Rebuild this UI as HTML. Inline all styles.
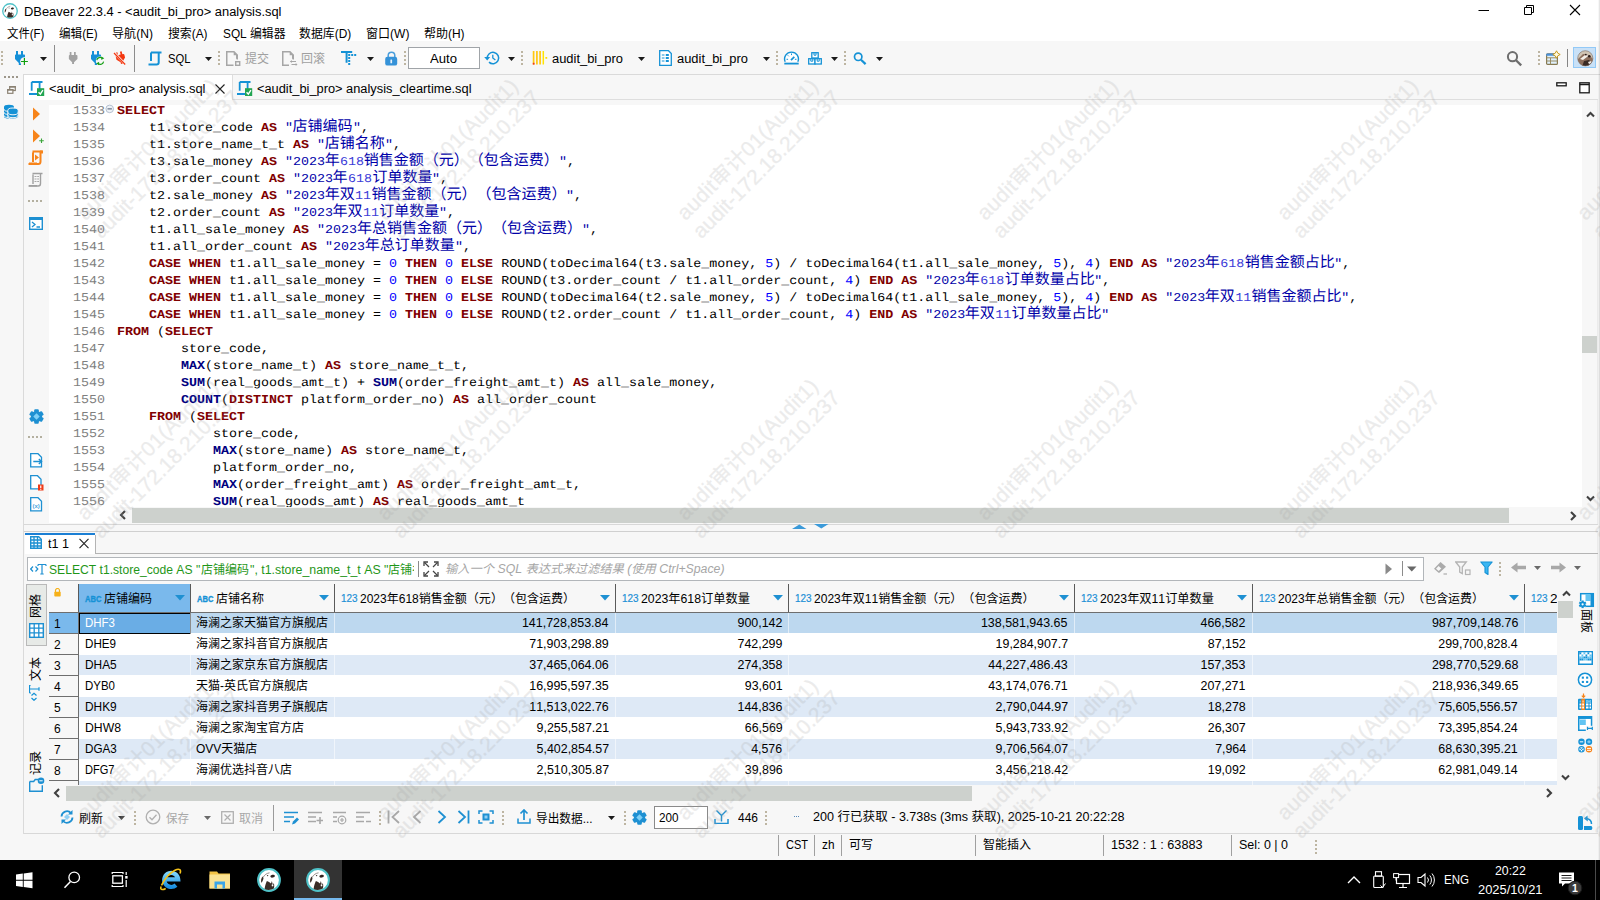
<!DOCTYPE html>
<html lang="zh-CN"><head><meta charset="utf-8"><title>DBeaver 22.3.4 - analysis.sql</title>
<style>
html,body{margin:0;padding:0;overflow:hidden}
body{width:1600px;height:900px;overflow:hidden;background:#f7f7f7;position:relative;font-family:"Liberation Sans","Noto Sans CJK SC",sans-serif;font-size:12px;color:#000;text-spacing-trim:space-all;font-kerning:none}
.a{position:absolute;display:block}
.t{position:absolute;white-space:pre;display:block}
.m{font-family:"Liberation Mono","Noto Sans CJK SC",monospace;text-rendering:geometricPrecision}
.c{display:inline-block;font-size:15px;line-height:16px;transform:scaleX(0.9000);transform-origin:0 0}
.k{color:#800000;font-weight:bold}
.f{color:#000080;font-weight:bold}
.s{color:#0000a8}
.n{color:#0000ff}
.wm{position:absolute;white-space:pre;text-align:center;font-size:21px;line-height:24px;color:#a4a4a4;-webkit-text-stroke:.3px #a4a4a4;opacity:.21;transform:rotate(-45deg);transform-origin:0 0;pointer-events:none}
.wm i{font-style:normal;letter-spacing:.3px}
.wm b{font-weight:normal;position:relative;left:2.6px}
</style></head>
<body>
<div class="a" style="left:0px;top:0px;width:1600px;height:41px;background:#fff;"></div>
<svg class="a" style="left:2px;top:3px;" width="16" height="16" viewBox="0 0 24 24"><circle cx="12" cy="12" r="10.900" fill="#fff" stroke="#4fc2c8" stroke-width="2"/><path d="M7.600 21c.4-3 1.200-5.600 2.300-7.900 1.500.5 2.900 1.300 4.100 2.400l.9-2.600.7 3.100 1.300-.6c.5 1.700.4 3.500 0 5.100-3 1.700-6.400 1.800-9.300.5z" fill="#3a2d27"/><path d="M14.600 16.700l1.500-.7.300 2.100-1.400.5z" fill="#fff"/><ellipse cx="15.600" cy="8.200" rx="2.300" ry="1.400" transform="rotate(-10 15.600 8.200)" fill="#2e2320"/><path d="M5.700 8.600c-1.500 1.500-2 3.900-1.400 6.200 1.100-1.200 1.900-2.900 2.200-4.900z" fill="#3a2d27"/><path d="M6.200 9.300c1.300-2.400 3.400-4 6.300-4.500" stroke="#7a6f6a" stroke-width=".8" fill="none"/><circle cx="10.600" cy="7.600" r=".7" fill="#3a2d27"/></svg>
<span class="t" style="top:2px;font-size:12.5px;line-height:20px;left:23.5px;transform-origin:0 50%;transform:scaleX(1.0322);">DBeaver 22.3.4 - &lt;audit_bi_pro&gt; analysis.sql</span>
<svg class="a" style="left:1478px;top:4px;" width="12" height="12" viewBox="0 0 12 12"><path d="M0.500 6.500H11" stroke="#000" stroke-width="1" fill="none"/></svg>
<svg class="a" style="left:1523px;top:4px;" width="12" height="12" viewBox="0 0 12 12"><path d="M1.500 3.500h7v7h-7zM3.500 3.500v-2h7v7h-2" stroke="#000" stroke-width="1" fill="none"/></svg>
<svg class="a" style="left:1569px;top:4px;" width="12" height="12" viewBox="0 0 12 12"><path d="M1 1l10 10M11 1L1 11" stroke="#000" stroke-width="1.1" fill="none"/></svg>
<span class="t" style="top:23.5px;font-size:12px;line-height:20px;left:7px;transform-origin:0 50%;transform:scaleX(0.951);">文件(F)</span>
<span class="t" style="top:23.5px;font-size:12px;line-height:20px;left:58.8px;transform-origin:0 50%;transform:scaleX(0.9675);">编辑(E)</span>
<span class="t" style="top:23.5px;font-size:12px;line-height:20px;left:112px;transform-origin:0 50%;transform:scaleX(1.0081);">导航(N)</span>
<span class="t" style="top:23.5px;font-size:12px;line-height:20px;left:168px;transform-origin:0 50%;transform:scaleX(0.9875);">搜索(A)</span>
<span class="t" style="top:23.5px;font-size:12px;line-height:20px;left:222.5px;transform-origin:0 50%;transform:scaleX(0.9864);">SQL 编辑器</span>
<span class="t" style="top:23.5px;font-size:12px;line-height:20px;left:298.8px;transform-origin:0 50%;transform:scaleX(0.991);">数据库(D)</span>
<span class="t" style="top:23.5px;font-size:12px;line-height:20px;left:366px;transform-origin:0 50%;transform:scaleX(1.0017);">窗口(W)</span>
<span class="t" style="top:23.5px;font-size:12px;line-height:20px;left:423.8px;transform-origin:0 50%;transform:scaleX(0.9982);">帮助(H)</span>
<div class="a" style="left:0px;top:41px;width:1600px;height:33px;background:#f7f7f7;"></div>
<div class="a" style="left:23px;top:74px;width:1577px;height:1px;background:#dadada;"></div>
<div class="a" style="left:1px;top:51px;width:2px;height:2px;background:#bdb5a2;"></div>
<div class="a" style="left:1px;top:55px;width:2px;height:2px;background:#bdb5a2;"></div>
<div class="a" style="left:1px;top:59px;width:2px;height:2px;background:#bdb5a2;"></div>
<div class="a" style="left:1px;top:63px;width:2px;height:2px;background:#bdb5a2;"></div>
<svg class="a" style="left:14px;top:51px;" width="16" height="16" viewBox="0 0 16 16"><path d="M2 0h2v3.500h3v-3.500h2v3.500h1c.6 0 1 .4 1 1v3.500l-4 4v2h-2.200v-2l-3.800-4v-3.500c0-.6.4-1 1-1z" fill="#1590d8" transform="scale(1)"/><circle cx="10.400" cy="10.500" r="4.300" fill="#f7f7f7"/><path d="M10.400 7v7M6.900 10.500h7" stroke="#10a010" stroke-width="1.200" fill="none"/></svg>
<svg class="a" style="left:40px;top:57px;" width="7" height="4" viewBox="0 0 7 4"><path d="M0 0H7L3.5 4Z" fill="#1a1a1a"/></svg>
<div class="a" style="left:54px;top:45px;width:1px;height:27px;background:#8c8c8c;"></div>
<svg class="a" style="left:68px;top:52px;" width="16" height="16" viewBox="0 0 16 16"><path d="M2 0h2v3.500h3v-3.500h2v3.500h1c.6 0 1 .4 1 1v3.500l-4 4v2h-2.200v-2l-3.800-4v-3.500c0-.6.4-1 1-1z" fill="#a2a2a2" transform="scale(0.86)"/></svg>
<svg class="a" style="left:90px;top:51px;" width="16" height="16" viewBox="0 0 16 16"><path d="M2 0h2v3.500h3v-3.500h2v3.500h1c.6 0 1 .4 1 1v3.500l-4 4v2h-2.200v-2l-3.800-4v-3.500c0-.6.4-1 1-1z" fill="#1590d8" transform="scale(1)"/><circle cx="10.200" cy="9.900" r="4.400" fill="#f7f7f7"/><path d="M6.800 9.200a3.400 3.400 0 0 1 5.600-1.900M13.600 10.600a3.400 3.400 0 0 1-5.600 1.900" stroke="#18a018" stroke-width="1.100" fill="none"/><path d="M11.300 5.500l3 1.800-3 1.700zM9.100 10.800l-3 1.800 3 1.700z" fill="#18a018"/></svg>
<svg class="a" style="left:113px;top:51px;" width="14" height="14" viewBox="0 0 14 14"><g transform="rotate(-14 7 7) translate(2.300 .8) scale(.88)"><path d="M2 0h2v3.500h3v-3.500h2v3.500h1c.6 0 1 .4 1 1v3.500l-4 4v2h-2.200v-2l-3.800-4v-3.500c0-.6.4-1 1-1z" fill="#f4360f"/></g><path d="M1.300 1.800L12 13" stroke="#f7f7f7" stroke-width="2.400"/><path d="M1 2L12.200 13.500" stroke="#f4360f" stroke-width="1.200"/></svg>
<div class="a" style="left:134px;top:45px;width:1px;height:27px;background:#8c8c8c;"></div>
<svg class="a" style="left:148px;top:50.5px;" width="15" height="15" viewBox="0 0 15 15"><path d="M3 1.500H13.500M3 1.500V10M10.700 2V11.500Q10.700 13.500 8.500 13.500H0.500" stroke="#1592d6" stroke-width="2" fill="none" stroke-linejoin="round"/></svg>
<span class="t" style="top:48.5px;font-size:12px;line-height:20px;left:167.5px;transform-origin:0 50%;transform:scaleX(0.9369);">SQL</span>
<svg class="a" style="left:205px;top:57px;" width="7" height="4" viewBox="0 0 7 4"><path d="M0 0H7L3.5 4Z" fill="#1a1a1a"/></svg>
<div class="a" style="left:218px;top:51px;width:2px;height:2px;background:#bdb5a2;"></div>
<div class="a" style="left:218px;top:55px;width:2px;height:2px;background:#bdb5a2;"></div>
<div class="a" style="left:218px;top:59px;width:2px;height:2px;background:#bdb5a2;"></div>
<div class="a" style="left:218px;top:63px;width:2px;height:2px;background:#bdb5a2;"></div>
<svg class="a" style="left:226px;top:51px;" width="15" height="15" viewBox="0 0 15 15"><path d="M0.750 0.750h7.200l3.300 3.300v10.200h-10.500z" fill="none" stroke="#a6a6a6" stroke-width="1.500"/><path d="M7.700 0.500l3.800 3.800v3.500h-1.500v-3.500h-2.300z" fill="#a6a6a6"/><rect x="7.500" y="8.500" width="7.500" height="6.500" fill="#f7f7f7"/><rect x="9.700" y="10.700" width="4" height="3.600" fill="#f7f7f7" stroke="#a6a6a6" stroke-width="1.400"/></svg>
<span class="t" style="top:48.5px;font-size:12px;line-height:20px;left:245px;color:#a0a0a0;transform-origin:0 50%;transform:scaleX(0.9993);">提交</span>
<svg class="a" style="left:282px;top:51px;" width="16" height="15" viewBox="0 0 16 15"><path d="M0.750 0.750h7.200l3.300 3.300v10.200h-10.500z" fill="none" stroke="#a6a6a6" stroke-width="1.500"/><path d="M7.700 0.500l3.800 3.800v3.500h-1.500v-3.500h-2.300z" fill="#a6a6a6"/><rect x="7" y="8.500" width="9" height="6.500" fill="#f7f7f7"/><path d="M8.500 10.500h5.500M9.500 13.500h5.500" stroke="#a6a6a6" stroke-width="1.200"/><path d="M9.800 9l-1.800 1.500 1.800 1.500zM13.700 12l1.800 1.500-1.800 1.500z" fill="#a6a6a6"/></svg>
<span class="t" style="top:48.5px;font-size:12px;line-height:20px;left:301px;color:#a0a0a0;transform-origin:0 50%;transform:scaleX(0.9993);">回滚</span>
<svg class="a" style="left:341px;top:51px;" width="16" height="15" viewBox="0 0 16 15"><path d="M0 0h11.200v1.900h-4.600v9.900h-2v-9.900h-4.600z" fill="#1592d6"/><path d="M7.200 3h2v2h-2zM10.200 3h2v2h-2zM13.200 3h2v2h-2zM7.200 6h2v2h-2zM7.200 9h2v2h-2zM7.200 12h2v2h-2z" fill="#1592d6"/></svg>
<svg class="a" style="left:367px;top:57px;" width="7" height="4" viewBox="0 0 7 4"><path d="M0 0H7L3.5 4Z" fill="#1a1a1a"/></svg>
<svg class="a" style="left:385px;top:50.5px;" width="13" height="15" viewBox="0 0 13 15"><path d="M3.200 6.500v-2a3.300 3.300 0 0 1 6.600 0v2.500" stroke="#4a9edc" stroke-width="1.500" fill="none"/><rect x="0.200" y="5.800" width="12" height="8.800" rx="2.200" fill="#3592d8"/><rect x="5.400" y="8.500" width="1.700" height="3.800" rx=".4" fill="#e8f2fb"/></svg>
<div class="a" style="left:404px;top:51px;width:2px;height:2px;background:#bdb5a2;"></div>
<div class="a" style="left:404px;top:55px;width:2px;height:2px;background:#bdb5a2;"></div>
<div class="a" style="left:404px;top:59px;width:2px;height:2px;background:#bdb5a2;"></div>
<div class="a" style="left:404px;top:63px;width:2px;height:2px;background:#bdb5a2;"></div>
<div class="a" style="left:408px;top:47px;width:72px;height:22px;background:#fff;border:1px solid #a0a4a8;box-sizing:border-box;"></div>
<span class="t" style="top:48.5px;font-size:12.5px;line-height:20px;left:430px;transform-origin:0 50%;transform:scaleX(1.0498);">Auto</span>
<svg class="a" style="left:484px;top:50px;" width="17" height="16" viewBox="0 0 17 16"><path d="M3.300 8.500a5.700 5.700 0 1 1 1.700 3.600" stroke="#1592d6" stroke-width="1.500" fill="none"/><path d="M0.200 7l3 3.600 3-3.600z" fill="#1592d6"/><path d="M8.800 4.800v3.200l2.600 2" stroke="#1592d6" stroke-width="1.300" fill="none"/></svg>
<svg class="a" style="left:508px;top:57px;" width="7" height="4" viewBox="0 0 7 4"><path d="M0 0H7L3.5 4Z" fill="#1a1a1a"/></svg>
<div class="a" style="left:521px;top:51px;width:2px;height:2px;background:#bdb5a2;"></div>
<div class="a" style="left:521px;top:55px;width:2px;height:2px;background:#bdb5a2;"></div>
<div class="a" style="left:521px;top:59px;width:2px;height:2px;background:#bdb5a2;"></div>
<div class="a" style="left:521px;top:63px;width:2px;height:2px;background:#bdb5a2;"></div>
<svg class="a" style="left:532px;top:51px;" width="16" height="14" viewBox="0 0 16 14"><path d="M1.600 0v13.500M4.900 0v13.500M8.100 0v13.500" stroke="#ffc810" stroke-width="1.700"/><path d="M11.300 0v13.500" stroke="#ffe400" stroke-width="1.500"/><rect x="0.800" y="11.800" width="1.700" height="1.800" fill="#f03020"/><rect x="13.400" y="6" width="1.800" height="1.800" fill="#ffe000"/></svg>
<span class="t" style="top:48.5px;font-size:12.5px;line-height:20px;left:552px;transform-origin:0 50%;transform:scaleX(1.0318);">audit_bi_pro</span>
<svg class="a" style="left:637.5px;top:57px;" width="7" height="4" viewBox="0 0 7 4"><path d="M0 0H7L3.5 4Z" fill="#1a1a1a"/></svg>
<svg class="a" style="left:659px;top:50px;" width="13" height="16" viewBox="0 0 13 16"><path d="M0.700 0.700h8.800l2.800 2.800v11.800h-11.600z" fill="#fff" stroke="#1592d6" stroke-width="1.300"/><path d="M2.800 5h2.700M2.800 8h2.700M2.800 11h2.700" stroke="#1592d6" stroke-width="1.200"/><path d="M6.800 4h3v2h-3zM6.800 7h3v2h-3zM6.800 10h3v2h-3z" fill="#1592d6"/></svg>
<span class="t" style="top:48.5px;font-size:12.5px;line-height:20px;left:677px;transform-origin:0 50%;transform:scaleX(1.0318);">audit_bi_pro</span>
<svg class="a" style="left:762.5px;top:57px;" width="7" height="4" viewBox="0 0 7 4"><path d="M0 0H7L3.5 4Z" fill="#1a1a1a"/></svg>
<div class="a" style="left:776px;top:51px;width:2px;height:2px;background:#bdb5a2;"></div>
<div class="a" style="left:776px;top:55px;width:2px;height:2px;background:#bdb5a2;"></div>
<div class="a" style="left:776px;top:59px;width:2px;height:2px;background:#bdb5a2;"></div>
<div class="a" style="left:776px;top:63px;width:2px;height:2px;background:#bdb5a2;"></div>
<svg class="a" style="left:783px;top:51px;" width="17" height="15" viewBox="0 0 17 15"><path d="M2.200 10.800a6.900 6.900 0 1 1 12.600 0" fill="#fff" stroke="#1592d6" stroke-width="1.400"/><path d="M1.300 12.600h14.400" stroke="#1592d6" stroke-width="1.800"/><path d="M8 9.200l3.300-3.400" stroke="#1592d6" stroke-width="1.700"/><path d="M3.500 8.300h1.600M11.900 8.300h1.600M8.500 2.500v1.600M4.800 4.300l1 1" stroke="#1592d6" stroke-width="1"/></svg>
<svg class="a" style="left:808px;top:52px;" width="14" height="13" viewBox="0 0 14 13"><rect x="3.800" y="0.700" width="6.400" height="5.300" fill="#fff" stroke="#1592d6" stroke-width="1.300"/><rect x="0.700" y="6.700" width="6.300" height="5.300" fill="#fff" stroke="#1592d6" stroke-width="1.300"/><rect x="7" y="6.700" width="6.300" height="5.300" fill="#fff" stroke="#1592d6" stroke-width="1.300"/><path d="M6 1v2.200h2v-2.200M2.800 7v2.200h2v-2.200M9.200 7v2.200h2v-2.200" stroke="#1592d6" stroke-width="1" fill="none"/></svg>
<svg class="a" style="left:831px;top:57px;" width="7" height="4" viewBox="0 0 7 4"><path d="M0 0H7L3.5 4Z" fill="#1a1a1a"/></svg>
<div class="a" style="left:844px;top:51px;width:2px;height:2px;background:#bdb5a2;"></div>
<div class="a" style="left:844px;top:55px;width:2px;height:2px;background:#bdb5a2;"></div>
<div class="a" style="left:844px;top:59px;width:2px;height:2px;background:#bdb5a2;"></div>
<div class="a" style="left:844px;top:63px;width:2px;height:2px;background:#bdb5a2;"></div>
<svg class="a" style="left:853px;top:52px;" width="14" height="13" viewBox="0 0 14 13"><circle cx="5.200" cy="4.800" r="3.700" fill="none" stroke="#1592d6" stroke-width="1.700"/><path d="M8 7.700l4.600 4.400" stroke="#1592d6" stroke-width="2.200"/></svg>
<svg class="a" style="left:876px;top:57px;" width="7" height="4" viewBox="0 0 7 4"><path d="M0 0H7L3.5 4Z" fill="#1a1a1a"/></svg>
<svg class="a" style="left:1506px;top:50px;" width="17" height="17" viewBox="0 0 17 17"><circle cx="6.500" cy="6.700" r="4.600" fill="none" stroke="#6e6e6e" stroke-width="2"/><path d="M9.800 10l5.400 5.400" stroke="#6e6e6e" stroke-width="2.300"/></svg>
<div class="a" style="left:1538px;top:51px;width:2px;height:2px;background:#bdb5a2;"></div>
<div class="a" style="left:1538px;top:55px;width:2px;height:2px;background:#bdb5a2;"></div>
<div class="a" style="left:1538px;top:59px;width:2px;height:2px;background:#bdb5a2;"></div>
<div class="a" style="left:1538px;top:63px;width:2px;height:2px;background:#bdb5a2;"></div>
<svg class="a" style="left:1545px;top:50px;" width="16" height="16" viewBox="0 0 16 16"><rect x="1.600" y="3.800" width="10.800" height="10.600" rx="1" fill="#dff0fc" stroke="#877a52" stroke-width="1.200"/><path d="M1.600 7.800h10.800M1.600 11h10.800M5.500 7.800v6.600" stroke="#9a8c62" stroke-width="1"/><path d="M1.200 5.800v-1.400a1 1 0 0 1 1-1h8v2.400z" fill="#4a90d9"/><path d="M11.500 0.800l1.300 2.400 2.400 1.300-2.400 1.300-1.300 2.400-1.300-2.400-2.400-1.300 2.400-1.300z" fill="#fffbe0" stroke="#c89a1e" stroke-width="1"/></svg>
<div class="a" style="left:1567px;top:49px;width:1px;height:18px;background:#858585;"></div>
<div class="a" style="left:1573px;top:47px;width:23px;height:21px;background:#c9e1f7;border:1px solid #92c9f7;box-sizing:border-box;"></div>
<svg class="a" style="left:1577px;top:50px;" width="17" height="17" viewBox="0 0 17 17"><defs><clipPath id="av"><circle cx="8.300" cy="8.300" r="7.600"/></clipPath></defs><g clip-path="url(#av)"><rect width="17" height="17" fill="#cfc4b4"/><path d="M0 10l6-6 6 1 5 5v7h-17z" fill="#8c6e5c"/><path d="M5 17l2-6 5-1 3 3v4z" fill="#3a2a24"/><path d="M3 9l5-4 4 .5-6 4.500z" fill="#f4efe8"/><circle cx="12.300" cy="6.300" r="1.300" fill="#2a1e1c"/><circle cx="8.800" cy="4.600" r=".9" fill="#2a1e1c"/><path d="M11 12l3-1 1 2-3 1z" fill="#efe8e0"/></g><circle cx="8.300" cy="8.300" r="7.600" fill="none" stroke="#7a6a60" stroke-width=".6"/></svg>
<div class="a" style="left:0px;top:75px;width:23px;height:758px;background:#f7f7f7;"></div>
<div class="a" style="left:23px;top:75px;width:1px;height:759px;background:#dadada;"></div>
<div class="a" style="left:4px;top:76px;width:2px;height:2px;background:#9c968a;"></div>
<div class="a" style="left:8px;top:76px;width:2px;height:2px;background:#9c968a;"></div>
<div class="a" style="left:12px;top:76px;width:2px;height:2px;background:#9c968a;"></div>
<div class="a" style="left:16px;top:76px;width:2px;height:2px;background:#9c968a;"></div>
<svg class="a" style="left:7px;top:86px;" width="9" height="8" viewBox="0 0 9 8"><rect x="2.700" y="0.700" width="5.600" height="3.800" fill="#f7f7f7" stroke="#8a8172" stroke-width="1.200"/><path d="M2.200 0.800h6.600" stroke="#8a8172" stroke-width="1.600"/><rect x="0.700" y="3.700" width="5.200" height="3.600" fill="#fff" stroke="#8a8172" stroke-width="1.200"/><path d="M0.200 3.800h6.200" stroke="#8a8172" stroke-width="1.600"/></svg>
<svg class="a" style="left:3px;top:104px;" width="16" height="16" viewBox="0 0 16 16"><g fill="#1592d6"><path d="M1 2.800a5 2.100 0 0 1 10 0v9.700a5 2.100 0 0 1-10 0z"/></g><g fill="none" stroke="#f7f7f7" stroke-width="1"><path d="M1 5.200a5 2.100 0 0 0 10 0M1 8.300a5 2.100 0 0 0 10 0M1 11.400a5 2.100 0 0 0 10 0"/></g><path d="M4.800 6.500a5.200 2.500 0 0 1 10.400 0v6a5.200 2.500 0 0 1-10.400 0z" fill="#1592d6" stroke="#f7f7f7" stroke-width="1"/><g fill="none" stroke="#f7f7f7" stroke-width="1"><path d="M5.300 8.600a4.700 2.200 0 0 0 9.400 0M5.300 11.500a4.700 2.200 0 0 0 9.400 0"/></g></svg>
<div class="a" style="left:24px;top:75px;width:1574px;height:25px;background:#f7f7f7;"></div>
<div class="a" style="left:24px;top:99px;width:1574px;height:1px;background:#dedede;"></div>
<div class="a" style="left:24px;top:75px;width:209px;height:25px;background:#fff;"></div>
<div class="a" style="left:232px;top:75px;width:1px;height:25px;background:#dedede;"></div>
<svg class="a" style="left:29px;top:80.8px;" width="16" height="16" viewBox="0 0 16 16"><path d="M2.700 1H13.500M2.700 1V9.800M10.600 1.500V11.500Q10.600 13 8.500 13H0" stroke="#1592d6" stroke-width="1.800" fill="none" stroke-linejoin="round"/><rect x="8" y="7.200" width="7.200" height="7.800" fill="#22a552"/><path d="M9.600 11.200l1.700 1.900 2.600-4" stroke="#fff" stroke-width="1.400" fill="none"/></svg>
<span class="t" style="top:79px;font-size:12.5px;line-height:20px;left:49px;transform-origin:0 50%;transform:scaleX(1.033);">&lt;audit_bi_pro&gt; analysis.sql</span>
<svg class="a" style="left:215px;top:84px;" width="10" height="10" viewBox="0 0 10 10"><path d="M0.500 0.500l9 9M9.500 0.500l-9 9" stroke="#222" stroke-width="1.100"/></svg>
<svg class="a" style="left:236.5px;top:80.8px;" width="16" height="16" viewBox="0 0 16 16"><path d="M2.700 1H13.500M2.700 1V9.800M10.600 1.500V11.500Q10.600 13 8.500 13H0" stroke="#1592d6" stroke-width="1.800" fill="none" stroke-linejoin="round"/><rect x="8" y="7.200" width="7.200" height="7.800" fill="#22a552"/><path d="M9.600 11.200l1.700 1.900 2.600-4" stroke="#fff" stroke-width="1.400" fill="none"/></svg>
<span class="t" style="top:79px;font-size:12.5px;line-height:20px;left:257px;transform-origin:0 50%;transform:scaleX(1.0255);">&lt;audit_bi_pro&gt; analysis_cleartime.sql</span>
<svg class="a" style="left:1555.5px;top:82px;" width="11" height="5" viewBox="0 0 11 5"><rect x="0.800" y="0.800" width="9.400" height="3" fill="#fff" stroke="#1a1a1a" stroke-width="1.300"/></svg>
<svg class="a" style="left:1578.5px;top:81.7px;" width="11" height="12" viewBox="0 0 11 12"><rect x="0.800" y="0.800" width="9.400" height="10" fill="#fff" stroke="#1a1a1a" stroke-width="1.300"/><path d="M0.800 2.500h9.400" stroke="#1a1a1a" stroke-width="1.500"/></svg>
<div class="a" style="left:24px;top:100px;width:1574px;height:424px;background:#f7f7f7;"></div>
<div class="a" style="left:49px;top:105px;width:1533px;height:402px;background:#fff;"></div>
<div class="a" style="left:49px;top:507px;width:67px;height:16px;background:#fff;"></div>
<div class="a" style="left:1597px;top:100px;width:1px;height:424px;background:#ebebeb;"></div>
<div class="a" style="left:24px;top:524px;width:1574px;height:1px;background:#d8d8d8;"></div>
<div class="a" style="left:49px;top:105px;width:1533px;height:402px;overflow:hidden">
<span class="t m" style="top:-4px;font-size:12px;line-height:20px;left:24px;color:#7f7f7f;transform:scaleX(1.11111);transform-origin:0 0;">1533</span>
<span class="t m" style="top:-4px;font-size:12px;line-height:20px;left:68px;transform:scaleX(1.11111);transform-origin:0 0;"><span class="k">SELECT</span></span>
<span class="t m" style="top:13px;font-size:12px;line-height:20px;left:24px;color:#7f7f7f;transform:scaleX(1.11111);transform-origin:0 0;">1534</span>
<span class="t m" style="top:13px;font-size:12px;line-height:20px;left:68px;transform:scaleX(1.11111);transform-origin:0 0;">    t1.store_code <span class="k">AS</span> <span class="s">"<span class="c" style="width:54px">店铺编码</span>"</span>,</span>
<span class="t m" style="top:30px;font-size:12px;line-height:20px;left:24px;color:#7f7f7f;transform:scaleX(1.11111);transform-origin:0 0;">1535</span>
<span class="t m" style="top:30px;font-size:12px;line-height:20px;left:68px;transform:scaleX(1.11111);transform-origin:0 0;">    t1.store_name_t_t <span class="k">AS</span> <span class="s">"<span class="c" style="width:54px">店铺名称</span>"</span>,</span>
<span class="t m" style="top:47px;font-size:12px;line-height:20px;left:24px;color:#7f7f7f;transform:scaleX(1.11111);transform-origin:0 0;">1536</span>
<span class="t m" style="top:47px;font-size:12px;line-height:20px;left:68px;transform:scaleX(1.11111);transform-origin:0 0;">    t3.sale_money <span class="k">AS</span> <span class="s">"2023<span class="c" style="width:13.5px">年</span><span style="color:#3c3cd8">618</span><span class="c" style="width:175.5px">销售金额（元）（包含运费）</span>"</span>,</span>
<span class="t m" style="top:64px;font-size:12px;line-height:20px;left:24px;color:#7f7f7f;transform:scaleX(1.11111);transform-origin:0 0;">1537</span>
<span class="t m" style="top:64px;font-size:12px;line-height:20px;left:68px;transform:scaleX(1.11111);transform-origin:0 0;">    t3.order_count <span class="k">AS</span> <span class="s">"2023<span class="c" style="width:13.5px">年</span><span style="color:#3c3cd8">618</span><span class="c" style="width:54px">订单数量</span>"</span>,</span>
<span class="t m" style="top:81px;font-size:12px;line-height:20px;left:24px;color:#7f7f7f;transform:scaleX(1.11111);transform-origin:0 0;">1538</span>
<span class="t m" style="top:81px;font-size:12px;line-height:20px;left:68px;transform:scaleX(1.11111);transform-origin:0 0;">    t2.sale_money <span class="k">AS</span> <span class="s">"2023<span class="c" style="width:27px">年双</span><span style="color:#3c3cd8">11</span><span class="c" style="width:175.5px">销售金额（元）（包含运费）</span>"</span>,</span>
<span class="t m" style="top:98px;font-size:12px;line-height:20px;left:24px;color:#7f7f7f;transform:scaleX(1.11111);transform-origin:0 0;">1539</span>
<span class="t m" style="top:98px;font-size:12px;line-height:20px;left:68px;transform:scaleX(1.11111);transform-origin:0 0;">    t2.order_count <span class="k">AS</span> <span class="s">"2023<span class="c" style="width:27px">年双</span><span style="color:#3c3cd8">11</span><span class="c" style="width:54px">订单数量</span>"</span>,</span>
<span class="t m" style="top:115px;font-size:12px;line-height:20px;left:24px;color:#7f7f7f;transform:scaleX(1.11111);transform-origin:0 0;">1540</span>
<span class="t m" style="top:115px;font-size:12px;line-height:20px;left:68px;transform:scaleX(1.11111);transform-origin:0 0;">    t1.all_sale_money <span class="k">AS</span> <span class="s">"2023<span class="c" style="width:202.5px">年总销售金额（元）（包含运费）</span>"</span>,</span>
<span class="t m" style="top:132px;font-size:12px;line-height:20px;left:24px;color:#7f7f7f;transform:scaleX(1.11111);transform-origin:0 0;">1541</span>
<span class="t m" style="top:132px;font-size:12px;line-height:20px;left:68px;transform:scaleX(1.11111);transform-origin:0 0;">    t1.all_order_count <span class="k">AS</span> <span class="s">"2023<span class="c" style="width:81px">年总订单数量</span>"</span>,</span>
<span class="t m" style="top:149px;font-size:12px;line-height:20px;left:24px;color:#7f7f7f;transform:scaleX(1.11111);transform-origin:0 0;">1542</span>
<span class="t m" style="top:149px;font-size:12px;line-height:20px;left:68px;transform:scaleX(1.11111);transform-origin:0 0;">    <span class="k">CASE</span> <span class="k">WHEN</span> t1.all_sale_money = <span class="n">0</span> <span class="k">THEN</span> <span class="n">0</span> <span class="k">ELSE</span> ROUND(toDecimal64(t3.sale_money, <span class="n">5</span>) / toDecimal64(t1.all_sale_money, <span class="n">5</span>), <span class="n">4</span>) <span class="k">END</span> <span class="k">AS</span> <span class="s">"2023<span class="c" style="width:13.5px">年</span><span style="color:#3c3cd8">618</span><span class="c" style="width:81px">销售金额占比</span>"</span>,</span>
<span class="t m" style="top:166px;font-size:12px;line-height:20px;left:24px;color:#7f7f7f;transform:scaleX(1.11111);transform-origin:0 0;">1543</span>
<span class="t m" style="top:166px;font-size:12px;line-height:20px;left:68px;transform:scaleX(1.11111);transform-origin:0 0;">    <span class="k">CASE</span> <span class="k">WHEN</span> t1.all_sale_money = <span class="n">0</span> <span class="k">THEN</span> <span class="n">0</span> <span class="k">ELSE</span> ROUND(t3.order_count / t1.all_order_count, <span class="n">4</span>) <span class="k">END</span> <span class="k">AS</span> <span class="s">"2023<span class="c" style="width:13.5px">年</span><span style="color:#3c3cd8">618</span><span class="c" style="width:81px">订单数量占比</span>"</span>,</span>
<span class="t m" style="top:183px;font-size:12px;line-height:20px;left:24px;color:#7f7f7f;transform:scaleX(1.11111);transform-origin:0 0;">1544</span>
<span class="t m" style="top:183px;font-size:12px;line-height:20px;left:68px;transform:scaleX(1.11111);transform-origin:0 0;">    <span class="k">CASE</span> <span class="k">WHEN</span> t1.all_sale_money = <span class="n">0</span> <span class="k">THEN</span> <span class="n">0</span> <span class="k">ELSE</span> ROUND(toDecimal64(t2.sale_money, <span class="n">5</span>) / toDecimal64(t1.all_sale_money, <span class="n">5</span>), <span class="n">4</span>) <span class="k">END</span> <span class="k">AS</span> <span class="s">"2023<span class="c" style="width:27px">年双</span><span style="color:#3c3cd8">11</span><span class="c" style="width:81px">销售金额占比</span>"</span>,</span>
<span class="t m" style="top:200px;font-size:12px;line-height:20px;left:24px;color:#7f7f7f;transform:scaleX(1.11111);transform-origin:0 0;">1545</span>
<span class="t m" style="top:200px;font-size:12px;line-height:20px;left:68px;transform:scaleX(1.11111);transform-origin:0 0;">    <span class="k">CASE</span> <span class="k">WHEN</span> t1.all_sale_money = <span class="n">0</span> <span class="k">THEN</span> <span class="n">0</span> <span class="k">ELSE</span> ROUND(t2.order_count / t1.all_order_count, <span class="n">4</span>) <span class="k">END</span> <span class="k">AS</span> <span class="s">"2023<span class="c" style="width:27px">年双</span><span style="color:#3c3cd8">11</span><span class="c" style="width:81px">订单数量占比</span>"</span></span>
<span class="t m" style="top:217px;font-size:12px;line-height:20px;left:24px;color:#7f7f7f;transform:scaleX(1.11111);transform-origin:0 0;">1546</span>
<span class="t m" style="top:217px;font-size:12px;line-height:20px;left:68px;transform:scaleX(1.11111);transform-origin:0 0;"><span class="k">FROM</span> (<span class="k">SELECT</span></span>
<span class="t m" style="top:234px;font-size:12px;line-height:20px;left:24px;color:#7f7f7f;transform:scaleX(1.11111);transform-origin:0 0;">1547</span>
<span class="t m" style="top:234px;font-size:12px;line-height:20px;left:68px;transform:scaleX(1.11111);transform-origin:0 0;">        store_code,</span>
<span class="t m" style="top:251px;font-size:12px;line-height:20px;left:24px;color:#7f7f7f;transform:scaleX(1.11111);transform-origin:0 0;">1548</span>
<span class="t m" style="top:251px;font-size:12px;line-height:20px;left:68px;transform:scaleX(1.11111);transform-origin:0 0;">        <span class="f">MAX</span>(store_name_t) <span class="k">AS</span> store_name_t_t,</span>
<span class="t m" style="top:268px;font-size:12px;line-height:20px;left:24px;color:#7f7f7f;transform:scaleX(1.11111);transform-origin:0 0;">1549</span>
<span class="t m" style="top:268px;font-size:12px;line-height:20px;left:68px;transform:scaleX(1.11111);transform-origin:0 0;">        <span class="f">SUM</span>(real_goods_amt_t) + <span class="f">SUM</span>(order_freight_amt_t) <span class="k">AS</span> all_sale_money,</span>
<span class="t m" style="top:285px;font-size:12px;line-height:20px;left:24px;color:#7f7f7f;transform:scaleX(1.11111);transform-origin:0 0;">1550</span>
<span class="t m" style="top:285px;font-size:12px;line-height:20px;left:68px;transform:scaleX(1.11111);transform-origin:0 0;">        <span class="f">COUNT</span>(<span class="k">DISTINCT</span> platform_order_no) <span class="k">AS</span> all_order_count</span>
<span class="t m" style="top:302px;font-size:12px;line-height:20px;left:24px;color:#7f7f7f;transform:scaleX(1.11111);transform-origin:0 0;">1551</span>
<span class="t m" style="top:302px;font-size:12px;line-height:20px;left:68px;transform:scaleX(1.11111);transform-origin:0 0;">    <span class="k">FROM</span> (<span class="k">SELECT</span></span>
<span class="t m" style="top:319px;font-size:12px;line-height:20px;left:24px;color:#7f7f7f;transform:scaleX(1.11111);transform-origin:0 0;">1552</span>
<span class="t m" style="top:319px;font-size:12px;line-height:20px;left:68px;transform:scaleX(1.11111);transform-origin:0 0;">            store_code,</span>
<span class="t m" style="top:336px;font-size:12px;line-height:20px;left:24px;color:#7f7f7f;transform:scaleX(1.11111);transform-origin:0 0;">1553</span>
<span class="t m" style="top:336px;font-size:12px;line-height:20px;left:68px;transform:scaleX(1.11111);transform-origin:0 0;">            <span class="f">MAX</span>(store_name) <span class="k">AS</span> store_name_t,</span>
<span class="t m" style="top:353px;font-size:12px;line-height:20px;left:24px;color:#7f7f7f;transform:scaleX(1.11111);transform-origin:0 0;">1554</span>
<span class="t m" style="top:353px;font-size:12px;line-height:20px;left:68px;transform:scaleX(1.11111);transform-origin:0 0;">            platform_order_no,</span>
<span class="t m" style="top:370px;font-size:12px;line-height:20px;left:24px;color:#7f7f7f;transform:scaleX(1.11111);transform-origin:0 0;">1555</span>
<span class="t m" style="top:370px;font-size:12px;line-height:20px;left:68px;transform:scaleX(1.11111);transform-origin:0 0;">            <span class="f">MAX</span>(order_freight_amt) <span class="k">AS</span> order_freight_amt_t,</span>
<span class="t m" style="top:387px;font-size:12px;line-height:20px;left:24px;color:#7f7f7f;transform:scaleX(1.11111);transform-origin:0 0;">1556</span>
<span class="t m" style="top:387px;font-size:12px;line-height:20px;left:68px;transform:scaleX(1.11111);transform-origin:0 0;">            <span class="f">SUM</span>(real_goods_amt) <span class="k">AS</span> real_goods_amt_t</span>
</div>
<svg class="a" style="left:105px;top:104px;" width="10" height="10" viewBox="0 0 10 10"><circle cx="4.700" cy="4.900" r="3.800" fill="#eef2f7" stroke="#b4c0d0" stroke-width="1"/><path d="M2.500 4.900h4.400" stroke="#4a5a70" stroke-width="1"/></svg>
<svg class="a" style="left:33px;top:107px;" width="8" height="14" viewBox="0 0 8 14"><path d="M0 0.500l7 6.500-7 6.500z" fill="#f7841a"/></svg>
<svg class="a" style="left:33px;top:129px;" width="11" height="14" viewBox="0 0 11 14"><path d="M0 0.500l7 6.500-7 6.500z" fill="#f7841a"/><path d="M8.500 9.500v4.500M6.200 11.800h4.600" stroke="#3aa53a" stroke-width="1.100"/></svg>
<svg class="a" style="left:28px;top:150px;" width="16" height="16" viewBox="0 0 16 16"><path d="M4.500 1.500h10M12.500 2v9.500c0 1.500-.8 2.500-2.200 2.500h-9.800M5 2.500v9.500" stroke="#f7841a" stroke-width="2" fill="none"/><path d="M1 12.500h8v2.500h-8z" fill="#f7841a"/><path d="M12 0.500h3v3h-3z" fill="#f7841a"/><path d="M7 4.500l4 3-4 3z" fill="#f7841a"/></svg>
<svg class="a" style="left:28px;top:172px;" width="16" height="16" viewBox="0 0 16 16"><path d="M4.500 1.500h10M12.500 2v9.500c0 1.500-.8 2.500-2.200 2.500h-9.800M5 2.500v9.500" stroke="#a0a0a0" stroke-width="1.400" fill="none"/><path d="M1 13h8v1.500h-8z" fill="#a0a0a0"/><path d="M6.500 4.500h4.500M6.500 7h4.500M6.500 9.500h4.500" stroke="#a8a8a8" stroke-width="1.100" stroke-dasharray="2 .7"/></svg>
<div class="a" style="left:28px;top:200px;width:2px;height:2px;background:#b4b0a0;"></div>
<div class="a" style="left:28px;top:436px;width:2px;height:2px;background:#b4b0a0;"></div>
<div class="a" style="left:32px;top:200px;width:2px;height:2px;background:#b4b0a0;"></div>
<div class="a" style="left:32px;top:436px;width:2px;height:2px;background:#b4b0a0;"></div>
<div class="a" style="left:36px;top:200px;width:2px;height:2px;background:#b4b0a0;"></div>
<div class="a" style="left:36px;top:436px;width:2px;height:2px;background:#b4b0a0;"></div>
<div class="a" style="left:40px;top:200px;width:2px;height:2px;background:#b4b0a0;"></div>
<div class="a" style="left:40px;top:436px;width:2px;height:2px;background:#b4b0a0;"></div>
<svg class="a" style="left:29px;top:217px;" width="14" height="13" viewBox="0 0 14 13"><rect x="0.700" y="0.700" width="12.600" height="11.600" fill="#fff" stroke="#1e90d2" stroke-width="1.400"/><rect x="0.700" y="0.700" width="12.600" height="2.300" fill="#1e90d2"/><path d="M3 5l3 2.500-3 2.500M7.500 10h3.500" stroke="#1e90d2" stroke-width="1.300" fill="none"/></svg>
<svg class="a" style="left:28.5px;top:408.5px;" width="15" height="15" viewBox="0 0 15 15"><g transform="translate(7.500 7.500)"><g fill="#1e90d2"><rect x="-2.300" y="-7.300" width="4.600" height="14.600" rx="1"/><rect x="-2.300" y="-7.300" width="4.600" height="14.600" rx="1" transform="rotate(60)"/><rect x="-2.300" y="-7.300" width="4.600" height="14.600" rx="1" transform="rotate(120)"/><circle r="5.600"/></g><path d="M0-3.200l3.200 3.200-3.200 3.200-3.200-3.200z" fill="#7fd0f7"/></g></svg>
<svg class="a" style="left:30px;top:453px;" width="13" height="15" viewBox="0 0 13 15"><path d="M0.700 0.700h7.300l3.500 3.500v9.600h-10.800z" fill="#fff" stroke="#1e90d2" stroke-width="1.300"/><path d="M3.300 8.500h8M8.800 6l2.800 2.500-2.800 2.500" stroke="#1e90d2" stroke-width="1.300" fill="none"/></svg>
<svg class="a" style="left:30px;top:475px;" width="14" height="16" viewBox="0 0 14 16"><path d="M0.700 0.700h6.800l3.500 3.500v9.600h-10.300z" fill="#fff" stroke="#1e90d2" stroke-width="1.300"/><rect x="8" y="9.500" width="5.500" height="6" fill="#f03a17"/><path d="M10.750 10.500v2.500M10.750 13.800v1" stroke="#fff" stroke-width="1.200"/></svg>
<svg class="a" style="left:30px;top:497px;" width="13" height="15" viewBox="0 0 13 15"><path d="M0.700 0.700h7.300l3.500 3.500v9.600h-10.800z" fill="#fff" stroke="#1e90d2" stroke-width="1.300"/><text x="6.100" y="11" font-size="6" font-weight="bold" font-family="Liberation Sans,sans-serif" text-anchor="middle" fill="#4aa6e0">(x)</text></svg>
<div class="a" style="left:1582px;top:105px;width:15px;height:402px;background:#f7f7f7;"></div>
<svg class="a" style="left:1585.5px;top:110.5px;" width="9" height="7" viewBox="0 0 9 7"><path d="M1 5.500l3.500-3.500 3.500 3.500" stroke="#404040" stroke-width="2.100" fill="none"/></svg>
<div class="a" style="left:1582px;top:336px;width:15px;height:17px;background:#cdd1cd;"></div>
<svg class="a" style="left:1585.5px;top:495px;" width="9" height="7" viewBox="0 0 9 7"><path d="M1 1.500l3.500 3.500 3.500-3.500" stroke="#404040" stroke-width="2.100" fill="none"/></svg>
<div class="a" style="left:116px;top:507px;width:1481px;height:16px;background:#f7f7f7;"></div>
<svg class="a" style="left:119px;top:510px;" width="8" height="10" viewBox="0 0 8 10"><path d="M6 1l-4 4 4 4" stroke="#404040" stroke-width="2.100" fill="none"/></svg>
<div class="a" style="left:132px;top:508px;width:1377px;height:15px;background:#cdd1cd;"></div>
<svg class="a" style="left:1569px;top:510.5px;" width="8" height="10" viewBox="0 0 8 10"><path d="M2 1l4 4-4 4" stroke="#404040" stroke-width="2.100" fill="none"/></svg>
<div class="a" style="left:24px;top:525px;width:1574px;height:7px;background:#f7f7f7;"></div>
<div class="a" style="left:24px;top:531px;width:1574px;height:1px;background:#d0d0d0;"></div>
<svg class="a" style="left:792px;top:524px;" width="15" height="5" viewBox="0 0 15 5"><path d="M0 5h14.500l-7.200-4.500z" fill="#3b9ad9"/></svg>
<svg class="a" style="left:814px;top:524px;" width="15" height="5" viewBox="0 0 15 5"><path d="M0 0h14.500l-7.200 4.500z" fill="#3b9ad9"/></svg>
<div class="a" style="left:24px;top:532px;width:1574px;height:301px;background:#f7f7f7;"></div>
<div class="a" style="left:1597px;top:532px;width:1px;height:301px;background:#ebebeb;"></div>
<div class="a" style="left:95px;top:553px;width:1503px;height:1px;background:#b4b4b4;"></div>
<div class="a" style="left:25px;top:533px;width:70px;height:21px;background:#fff;"></div>
<div class="a" style="left:25px;top:533px;width:70px;height:2px;background:#1b7fd4;"></div>
<div class="a" style="left:95px;top:535px;width:1px;height:19px;background:#b4b4b4;"></div>
<svg class="a" style="left:30px;top:536px;" width="12" height="13" viewBox="0 0 12 13"><path d="M0.700 0.700h8l2.600 2.600v9h-10.600z" fill="#fff" stroke="#1e90d2" stroke-width="1.400"/><path d="M0.700 4h10.600M0.700 7h10.600M0.700 10h10.600M4 0.700v12M7.500 0.700v12" stroke="#1e90d2" stroke-width="1.300"/></svg>
<span class="t" style="top:534px;font-size:12px;line-height:20px;left:48px;transform-origin:0 50%;transform:scaleX(1.0492);">t1 1</span>
<svg class="a" style="left:79px;top:538px;" width="10" height="11" viewBox="0 0 10 11"><path d="M0.500 0.800l9 9.400M9.500 0.800l-9 9.400" stroke="#222" stroke-width="1.100"/></svg>
<div class="a" style="left:27px;top:557px;width:1397px;height:24px;background:#fff;border:1px solid #b2b6ba;box-sizing:border-box;"></div>
<svg class="a" style="left:30px;top:563px;" width="17" height="12" viewBox="0 0 17 12"><path d="M3 3.500l-2.300 2.500 2.300 2.500M5.500 3.500l2.300 2.500-2.300 2.500" stroke="#1e90d2" stroke-width="1.200" fill="none"/><path d="M8 1.500h8M12 1.500v9.500M10.300 11h3.400M8 1.500v1.500M16 1.500v1.500" stroke="#1e90d2" stroke-width="1.200" fill="none"/></svg>
<div class="a" style="left:49px;top:558px;width:365px;height:22px;overflow:hidden">
<span class="t" style="top:1.5px;font-size:12px;line-height:20px;left:0.3px;color:#1f9618;transform-origin:0 50%;transform:scaleX(1.0102);">SELECT t1.store_code AS "</span>
<span class="t" style="top:1.5px;font-size:12px;line-height:20px;left:152px;color:#1f9618;transform-origin:0 50%;transform:scaleX(0.9997);">店铺编码</span>
<span class="t" style="top:1.5px;font-size:12px;line-height:20px;left:200.5px;color:#1f9618;transform-origin:0 50%;transform:scaleX(1.029);">", t1.store_name_t_t AS "</span>
<span class="t" style="top:1.5px;font-size:12px;line-height:20px;left:339px;color:#1f9618;transform-origin:0 50%;transform:scaleX(0.9997);">店铺名称</span>
</div>
<div class="a" style="left:418px;top:561px;width:1px;height:16px;background:#8c8c8c;"></div>
<svg class="a" style="left:423px;top:561px;" width="16" height="16" viewBox="0 0 16 16"><path d="M1 5v-4h4M11 1h4v4M15 11v4h-4M5 15h-4v-4" stroke="#444" stroke-width="1.300" fill="none"/><path d="M1.500 1.500l4.500 4.500M14.500 1.500l-4.500 4.500M14.500 14.500l-4.500-4.500M1.500 14.500l4.500-4.500" stroke="#444" stroke-width="1.200"/></svg>
<span class="t" style="top:559px;font-size:12px;line-height:20px;left:444.5px;color:#a6a6a6;font-style:italic;transform-origin:0 50%;transform:scaleX(1.0236);">输入一个 SQL 表达式来过滤结果 (使用 Ctrl+Space)</span>
<svg class="a" style="left:1385px;top:563px;" width="8" height="12" viewBox="0 0 8 12"><path d="M0.500 0.500l6.500 5.500-6.500 5.500z" fill="#8a8a8a"/></svg>
<div class="a" style="left:1402px;top:561px;width:1px;height:15px;background:#8c8c8c;"></div>
<svg class="a" style="left:1407px;top:566px;" width="10" height="6" viewBox="0 0 10 6"><path d="M0 0.500h9.500l-4.750 5z" fill="#686868"/></svg>
<svg class="a" style="left:1433px;top:561px;" width="15" height="14" viewBox="0 0 15 14"><path d="M5.500 11.800l-4.500-4 6.500-6.800 5.500 4.800-6.500 6z" fill="#ababab"/><path d="M3 7.700l2.700 2.400 2.600-2.600-2.700-2.500z" fill="#f7f7f7"/><path d="M10.500 13h3.500" stroke="#ababab" stroke-width="1.200"/></svg>
<svg class="a" style="left:1455px;top:561px;" width="16" height="15" viewBox="0 0 16 15"><path d="M0.700 1h10.600l-4 5v6.500l-2.600-1.500v-5z" fill="none" stroke="#b4b4b4" stroke-width="1.300"/><rect x="10.500" y="9" width="4.500" height="4.500" fill="#f7f7f7" stroke="#b4b4b4" stroke-width="1.200"/></svg>
<svg class="a" style="left:1480px;top:561px;" width="13" height="15" viewBox="0 0 13 15"><path d="M0.800 1h11.400l-4.200 5v7.500l-3-2v-5.500z" fill="#3ab6f2" stroke="#1592d6" stroke-width="1.100" stroke-linejoin="round"/></svg>
<div class="a" style="left:1499px;top:562px;width:2px;height:2px;background:#bdb5a2;"></div>
<div class="a" style="left:1499px;top:566px;width:2px;height:2px;background:#bdb5a2;"></div>
<div class="a" style="left:1499px;top:570px;width:2px;height:2px;background:#bdb5a2;"></div>
<div class="a" style="left:1499px;top:574px;width:2px;height:2px;background:#bdb5a2;"></div>
<svg class="a" style="left:1511px;top:562px;" width="15" height="11" viewBox="0 0 15 11"><path d="M15 3.700h-8.500v-3.200l-6.500 5 6.500 5v-3.200h8.500z" fill="#a8a8a8"/></svg>
<svg class="a" style="left:1534px;top:566px;" width="7" height="4" viewBox="0 0 7 4"><path d="M0 0H7L3.5 4Z" fill="#6a6a6a"/></svg>
<svg class="a" style="left:1551px;top:562px;" width="15" height="11" viewBox="0 0 15 11"><path d="M0 3.700h8.500v-3.200l6.500 5-6.500 5v-3.200h-8.500z" fill="#a8a8a8"/></svg>
<svg class="a" style="left:1574px;top:566px;" width="7" height="4" viewBox="0 0 7 4"><path d="M0 0H7L3.5 4Z" fill="#6a6a6a"/></svg>
<div class="a" style="left:26px;top:584px;width:21px;height:62px;background:#e7eae7;border:1px solid #b9b9b9;box-sizing:border-box;"></div>
<span class="t" style="left:35.5px;top:606px;line-height:14px;font-size:12px;color:#000;transform:translate(-50%,-50%) rotate(-90deg)">网格</span>
<svg class="a" style="left:29px;top:623px;" width="15" height="15" viewBox="0 0 15 15"><rect x="0.700" y="0.700" width="13.600" height="13.600" fill="#fff" stroke="#1e90d2" stroke-width="1.400"/><path d="M0.700 5.200h13.600M0.700 9.800h13.600M5.200 0.700v13.600M9.800 0.700v13.600" stroke="#1e90d2" stroke-width="1.300"/></svg>
<span class="t" style="left:35.5px;top:668.5px;line-height:14px;font-size:12px;color:#000;transform:translate(-50%,-50%) rotate(-90deg)">文本</span>
<svg class="a" style="left:29px;top:685px;" width="12" height="16" viewBox="0 0 12 16"><g transform="rotate(-90 6 8)"><path d="M1 4.500l-2.300 2.500 2.300 2.500M3.500 4.500l2.300 2.500-2.300 2.500" stroke="#1592d6" stroke-width="1.200" fill="none"/><path d="M6 2.500h8M10 2.500v9.500M8.300 12h3.400M6 2.500v1.500M14 2.500v1.500" stroke="#1592d6" stroke-width="1.200" fill="none"/></g></svg>
<span class="t" style="left:35.5px;top:763px;line-height:14px;font-size:12px;color:#000;transform:translate(-50%,-50%) rotate(-90deg)">记录</span>
<svg class="a" style="left:29px;top:777px;" width="16" height="15" viewBox="0 0 16 15"><path d="M0.700 4.500h4l1.500-2h3M0.700 4.500v9.800h12.600v-6" stroke="#1e90d2" stroke-width="1.400" fill="none"/><circle cx="12" cy="3.800" r="3.300" fill="#1e90d2"/><path d="M10.300 3.800h3.400" stroke="#fff" stroke-width="1"/></svg>
<div class="a" style="left:49px;top:584px;width:1508px;height:201px;overflow:hidden;background:#fff">
<div class="a" style="left:0px;top:0px;width:1508px;height:28px;background:#f7f7f7;"></div>
<div class="a" style="left:30px;top:0px;width:112px;height:28px;background:#7ab9ec;"></div>
<svg class="a" style="left:5px;top:4px;" width="7" height="9" viewBox="0 0 7 9"><path d="M1.500 4v-1.500a2 2 0 0 1 4 0v1.500" stroke="#f6b11a" stroke-width="1.200" fill="none"/><rect x="0.300" y="3.800" width="6.400" height="4.800" rx=".8" fill="#f6b11a"/></svg>
<span class="t" style="top:4.5px;font-size:9.5px;line-height:20px;left:35.5px;color:#1592d6;font-weight:bold;-webkit-text-stroke:.35px #1592d6;transform-origin:0 50%;transform:scaleX(0.8012);">ABC</span>
<span class="t" style="top:5px;font-size:12px;line-height:20px;left:55px;transform-origin:0 50%;transform:scaleX(0.9997);">店铺编码</span>
<svg class="a" style="left:126px;top:11px;" width="10" height="6" viewBox="0 0 10 6"><path d="M0 0h10l-5 5.500z" fill="#1e90d2"/></svg>
<span class="t" style="top:4.5px;font-size:9.5px;line-height:20px;left:147.5px;color:#1592d6;font-weight:bold;-webkit-text-stroke:.35px #1592d6;transform-origin:0 50%;transform:scaleX(0.8012);">ABC</span>
<span class="t" style="top:5px;font-size:12px;line-height:20px;left:167px;transform-origin:0 50%;transform:scaleX(0.9997);">店铺名称</span>
<svg class="a" style="left:270px;top:11px;" width="10" height="6" viewBox="0 0 10 6"><path d="M0 0h10l-5 5.500z" fill="#1e90d2"/></svg>
<span class="t" style="top:3.5px;font-size:11.5px;line-height:20px;left:291.6px;color:#1a8fd6;-webkit-text-stroke:.2px #1a8fd6;transform-origin:0 50%;transform:scaleX(0.8651);">123</span>
<span class="t" style="top:5px;font-size:12px;line-height:20px;left:310.8px;transform-origin:0 50%;transform:scaleX(1.0013);">2023年618销售金额（元）（包含运费）</span>
<svg class="a" style="left:551px;top:11px;" width="10" height="6" viewBox="0 0 10 6"><path d="M0 0h10l-5 5.500z" fill="#1e90d2"/></svg>
<span class="t" style="top:3.5px;font-size:11.5px;line-height:20px;left:572.6px;color:#1a8fd6;-webkit-text-stroke:.2px #1a8fd6;transform-origin:0 50%;transform:scaleX(0.8651);">123</span>
<span class="t" style="top:5px;font-size:12px;line-height:20px;left:591.8px;transform-origin:0 50%;transform:scaleX(1.0214);">2023年618订单数量</span>
<svg class="a" style="left:724px;top:11px;" width="10" height="6" viewBox="0 0 10 6"><path d="M0 0h10l-5 5.500z" fill="#1e90d2"/></svg>
<span class="t" style="top:3.5px;font-size:11.5px;line-height:20px;left:745.6px;color:#1a8fd6;-webkit-text-stroke:.2px #1a8fd6;transform-origin:0 50%;transform:scaleX(0.8651);">123</span>
<span class="t" style="top:5px;font-size:12px;line-height:20px;left:764.8px;transform-origin:0 50%;transform:scaleX(1.0021);">2023年双11销售金额（元）（包含运费）</span>
<svg class="a" style="left:1010px;top:11px;" width="10" height="6" viewBox="0 0 10 6"><path d="M0 0h10l-5 5.500z" fill="#1e90d2"/></svg>
<span class="t" style="top:3.5px;font-size:11.5px;line-height:20px;left:1031.6px;color:#1a8fd6;-webkit-text-stroke:.2px #1a8fd6;transform-origin:0 50%;transform:scaleX(0.8651);">123</span>
<span class="t" style="top:5px;font-size:12px;line-height:20px;left:1050.8px;transform-origin:0 50%;transform:scaleX(1.0174);">2023年双11订单数量</span>
<svg class="a" style="left:1188px;top:11px;" width="10" height="6" viewBox="0 0 10 6"><path d="M0 0h10l-5 5.500z" fill="#1e90d2"/></svg>
<span class="t" style="top:3.5px;font-size:11.5px;line-height:20px;left:1209.6px;color:#1a8fd6;-webkit-text-stroke:.2px #1a8fd6;transform-origin:0 50%;transform:scaleX(0.8651);">123</span>
<span class="t" style="top:5px;font-size:12px;line-height:20px;left:1228.8px;transform-origin:0 50%;transform:scaleX(0.9966);">2023年总销售金额（元）（包含运费）</span>
<svg class="a" style="left:1460px;top:11px;" width="10" height="6" viewBox="0 0 10 6"><path d="M0 0h10l-5 5.500z" fill="#1e90d2"/></svg>
<span class="t" style="top:3.5px;font-size:11.5px;line-height:20px;left:1481.6px;color:#1a8fd6;-webkit-text-stroke:.2px #1a8fd6;transform-origin:0 50%;transform:scaleX(0.8651);">123</span>
<span class="t" style="top:5px;font-size:12px;line-height:20px;left:1500.8px;transform-origin:0 50%;transform:scaleX(1.1347);">2023年总订单数量</span>
<div class="a" style="left:30px;top:29px;width:1478px;height:20px;background:#bdd8ef;"></div>
<div class="a" style="left:0px;top:29px;width:29px;height:20px;background:#7ab9ec;"></div>
<div class="a" style="left:0px;top:49px;width:29px;height:1px;background:#6e6e6e;"></div>
<span class="t" style="top:29.7px;font-size:12px;line-height:20px;left:5px;">1</span>
<div class="a" style="left:30px;top:29px;width:112px;height:21px;background:#6aade5;border:1px solid #000;box-sizing:border-box;"></div>
<span class="t" style="top:28.7px;font-size:12px;line-height:20px;left:35.5px;color:#fff;transform-origin:0 50%;transform:scaleX(0.9571);">DHF3</span>
<span class="t" style="top:28.7px;font-size:12px;line-height:20px;left:147px;">海澜之家天猫官方旗舰店</span>
<span class="t" style="top:28.7px;font-size:12px;line-height:20px;right:948.3px;transform-origin:100% 50%;transform:scaleX(1.0369);">141,728,853.84</span>
<span class="t" style="top:28.7px;font-size:12px;line-height:20px;right:774.8px;transform-origin:100% 50%;transform:scaleX(1.0348);">900,142</span>
<span class="t" style="top:28.7px;font-size:12px;line-height:20px;right:489.3px;transform-origin:100% 50%;transform:scaleX(1.0369);">138,581,943.65</span>
<span class="t" style="top:28.7px;font-size:12px;line-height:20px;right:311.2px;transform-origin:100% 50%;transform:scaleX(1.0348);">466,582</span>
<span class="t" style="top:28.7px;font-size:12px;line-height:20px;right:38.8px;transform-origin:100% 50%;transform:scaleX(1.0369);">987,709,148.76</span>
<div class="a" style="left:0px;top:50px;width:29px;height:20px;background:#f7f7f7;"></div>
<div class="a" style="left:0px;top:70px;width:29px;height:1px;background:#6e6e6e;"></div>
<span class="t" style="top:50.7px;font-size:12px;line-height:20px;left:5px;">2</span>
<span class="t" style="top:49.7px;font-size:12px;line-height:20px;left:35.5px;transform-origin:0 50%;transform:scaleX(0.9683);">DHE9</span>
<span class="t" style="top:49.7px;font-size:12px;line-height:20px;left:147px;">海澜之家抖音官方旗舰店</span>
<span class="t" style="top:49.7px;font-size:12px;line-height:20px;right:948.3px;transform-origin:100% 50%;transform:scaleX(1.0358);">71,903,298.89</span>
<span class="t" style="top:49.7px;font-size:12px;line-height:20px;right:774.8px;transform-origin:100% 50%;transform:scaleX(1.0348);">742,299</span>
<span class="t" style="top:49.7px;font-size:12px;line-height:20px;right:489.3px;transform-origin:100% 50%;transform:scaleX(1.0346);">19,284,907.7</span>
<span class="t" style="top:49.7px;font-size:12px;line-height:20px;right:311.2px;transform-origin:100% 50%;transform:scaleX(1.0326);">87,152</span>
<span class="t" style="top:49.7px;font-size:12px;line-height:20px;right:38.8px;transform-origin:100% 50%;transform:scaleX(1.0358);">299,700,828.4</span>
<div class="a" style="left:30px;top:71px;width:1478px;height:20px;background:#dee9f6;"></div>
<div class="a" style="left:0px;top:71px;width:29px;height:20px;background:#f7f7f7;"></div>
<div class="a" style="left:0px;top:91px;width:29px;height:1px;background:#6e6e6e;"></div>
<span class="t" style="top:71.7px;font-size:12px;line-height:20px;left:5px;">3</span>
<span class="t" style="top:70.7px;font-size:12px;line-height:20px;left:35.5px;transform-origin:0 50%;transform:scaleX(0.9901);">DHA5</span>
<span class="t" style="top:70.7px;font-size:12px;line-height:20px;left:147px;">海澜之家京东官方旗舰店</span>
<span class="t" style="top:70.7px;font-size:12px;line-height:20px;right:948.3px;transform-origin:100% 50%;transform:scaleX(1.0358);">37,465,064.06</span>
<span class="t" style="top:70.7px;font-size:12px;line-height:20px;right:774.8px;transform-origin:100% 50%;transform:scaleX(1.0348);">274,358</span>
<span class="t" style="top:70.7px;font-size:12px;line-height:20px;right:489.3px;transform-origin:100% 50%;transform:scaleX(1.0358);">44,227,486.43</span>
<span class="t" style="top:70.7px;font-size:12px;line-height:20px;right:311.2px;transform-origin:100% 50%;transform:scaleX(1.0348);">157,353</span>
<span class="t" style="top:70.7px;font-size:12px;line-height:20px;right:38.8px;transform-origin:100% 50%;transform:scaleX(1.0369);">298,770,529.68</span>
<div class="a" style="left:0px;top:92px;width:29px;height:20px;background:#f7f7f7;"></div>
<div class="a" style="left:0px;top:112px;width:29px;height:1px;background:#6e6e6e;"></div>
<span class="t" style="top:92.7px;font-size:12px;line-height:20px;left:5px;">4</span>
<span class="t" style="top:91.7px;font-size:12px;line-height:20px;left:35.5px;transform-origin:0 50%;transform:scaleX(0.9567);">DYB0</span>
<span class="t" style="top:91.7px;font-size:12px;line-height:20px;left:147px;">天猫-英氏官方旗舰店</span>
<span class="t" style="top:91.7px;font-size:12px;line-height:20px;right:948.3px;transform-origin:100% 50%;transform:scaleX(1.0358);">16,995,597.35</span>
<span class="t" style="top:91.7px;font-size:12px;line-height:20px;right:774.8px;transform-origin:100% 50%;transform:scaleX(1.0326);">93,601</span>
<span class="t" style="top:91.7px;font-size:12px;line-height:20px;right:489.3px;transform-origin:100% 50%;transform:scaleX(1.0358);">43,174,076.71</span>
<span class="t" style="top:91.7px;font-size:12px;line-height:20px;right:311.2px;transform-origin:100% 50%;transform:scaleX(1.0348);">207,271</span>
<span class="t" style="top:91.7px;font-size:12px;line-height:20px;right:38.8px;transform-origin:100% 50%;transform:scaleX(1.0369);">218,936,349.65</span>
<div class="a" style="left:30px;top:113px;width:1478px;height:20px;background:#dee9f6;"></div>
<div class="a" style="left:0px;top:113px;width:29px;height:20px;background:#f7f7f7;"></div>
<div class="a" style="left:0px;top:133px;width:29px;height:1px;background:#6e6e6e;"></div>
<span class="t" style="top:113.7px;font-size:12px;line-height:20px;left:5px;">5</span>
<span class="t" style="top:112.7px;font-size:12px;line-height:20px;left:35.5px;transform-origin:0 50%;transform:scaleX(0.9901);">DHK9</span>
<span class="t" style="top:112.7px;font-size:12px;line-height:20px;left:147px;">海澜之家抖音男子旗舰店</span>
<span class="t" style="top:112.7px;font-size:12px;line-height:20px;right:948.3px;transform-origin:100% 50%;transform:scaleX(1.0358);">11,513,022.76</span>
<span class="t" style="top:112.7px;font-size:12px;line-height:20px;right:774.8px;transform-origin:100% 50%;transform:scaleX(1.0348);">144,836</span>
<span class="t" style="top:112.7px;font-size:12px;line-height:20px;right:489.3px;transform-origin:100% 50%;transform:scaleX(1.0346);">2,790,044.97</span>
<span class="t" style="top:112.7px;font-size:12px;line-height:20px;right:311.2px;transform-origin:100% 50%;transform:scaleX(1.0326);">18,278</span>
<span class="t" style="top:112.7px;font-size:12px;line-height:20px;right:38.8px;transform-origin:100% 50%;transform:scaleX(1.0358);">75,605,556.57</span>
<div class="a" style="left:0px;top:134px;width:29px;height:20px;background:#f7f7f7;"></div>
<div class="a" style="left:0px;top:154px;width:29px;height:1px;background:#6e6e6e;"></div>
<span class="t" style="top:134.7px;font-size:12px;line-height:20px;left:5px;">6</span>
<span class="t" style="top:133.7px;font-size:12px;line-height:20px;left:35.5px;transform-origin:0 50%;transform:scaleX(1.0186);">DHW8</span>
<span class="t" style="top:133.7px;font-size:12px;line-height:20px;left:147px;">海澜之家淘宝官方店</span>
<span class="t" style="top:133.7px;font-size:12px;line-height:20px;right:948.3px;transform-origin:100% 50%;transform:scaleX(1.0346);">9,255,587.21</span>
<span class="t" style="top:133.7px;font-size:12px;line-height:20px;right:774.8px;transform-origin:100% 50%;transform:scaleX(1.0326);">66,569</span>
<span class="t" style="top:133.7px;font-size:12px;line-height:20px;right:489.3px;transform-origin:100% 50%;transform:scaleX(1.0346);">5,943,733.92</span>
<span class="t" style="top:133.7px;font-size:12px;line-height:20px;right:311.2px;transform-origin:100% 50%;transform:scaleX(1.0326);">26,307</span>
<span class="t" style="top:133.7px;font-size:12px;line-height:20px;right:38.8px;transform-origin:100% 50%;transform:scaleX(1.0358);">73,395,854.24</span>
<div class="a" style="left:30px;top:155px;width:1478px;height:20px;background:#dee9f6;"></div>
<div class="a" style="left:0px;top:155px;width:29px;height:20px;background:#f7f7f7;"></div>
<div class="a" style="left:0px;top:175px;width:29px;height:1px;background:#6e6e6e;"></div>
<span class="t" style="top:155.7px;font-size:12px;line-height:20px;left:5px;">7</span>
<span class="t" style="top:154.7px;font-size:12px;line-height:20px;left:35.5px;transform-origin:0 50%;transform:scaleX(0.9698);">DGA3</span>
<span class="t" style="top:154.7px;font-size:12px;line-height:20px;left:147px;">OVV天猫店</span>
<span class="t" style="top:154.7px;font-size:12px;line-height:20px;right:948.3px;transform-origin:100% 50%;transform:scaleX(1.0346);">5,402,854.57</span>
<span class="t" style="top:154.7px;font-size:12px;line-height:20px;right:774.8px;transform-origin:100% 50%;transform:scaleX(1.0289);">4,576</span>
<span class="t" style="top:154.7px;font-size:12px;line-height:20px;right:489.3px;transform-origin:100% 50%;transform:scaleX(1.0346);">9,706,564.07</span>
<span class="t" style="top:154.7px;font-size:12px;line-height:20px;right:311.2px;transform-origin:100% 50%;transform:scaleX(1.0289);">7,964</span>
<span class="t" style="top:154.7px;font-size:12px;line-height:20px;right:38.8px;transform-origin:100% 50%;transform:scaleX(1.0358);">68,630,395.21</span>
<div class="a" style="left:0px;top:176px;width:29px;height:20px;background:#f7f7f7;"></div>
<div class="a" style="left:0px;top:196px;width:29px;height:1px;background:#6e6e6e;"></div>
<span class="t" style="top:176.7px;font-size:12px;line-height:20px;left:5px;">8</span>
<span class="t" style="top:175.7px;font-size:12px;line-height:20px;left:35.5px;transform-origin:0 50%;transform:scaleX(0.9214);">DFG7</span>
<span class="t" style="top:175.7px;font-size:12px;line-height:20px;left:147px;">海澜优选抖音八店</span>
<span class="t" style="top:175.7px;font-size:12px;line-height:20px;right:948.3px;transform-origin:100% 50%;transform:scaleX(1.0346);">2,510,305.87</span>
<span class="t" style="top:175.7px;font-size:12px;line-height:20px;right:774.8px;transform-origin:100% 50%;transform:scaleX(1.0326);">39,896</span>
<span class="t" style="top:175.7px;font-size:12px;line-height:20px;right:489.3px;transform-origin:100% 50%;transform:scaleX(1.0346);">3,456,218.42</span>
<span class="t" style="top:175.7px;font-size:12px;line-height:20px;right:311.2px;transform-origin:100% 50%;transform:scaleX(1.0326);">19,092</span>
<span class="t" style="top:175.7px;font-size:12px;line-height:20px;right:38.8px;transform-origin:100% 50%;transform:scaleX(1.0358);">62,981,049.14</span>
<div class="a" style="left:30px;top:197px;width:1478px;height:20px;background:#dee9f6;"></div>
<div class="a" style="left:0px;top:197px;width:29px;height:20px;background:#f7f7f7;"></div>
<div class="a" style="left:0px;top:217px;width:29px;height:1px;background:#6e6e6e;"></div>
<div class="a" style="left:29px;top:0px;width:1px;height:28px;background:#5a5a5a;"></div>
<div class="a" style="left:141px;top:0px;width:1px;height:28px;background:#5a5a5a;"></div>
<div class="a" style="left:141px;top:29px;width:1px;height:180px;background:rgba(255,255,255,.55);"></div>
<div class="a" style="left:285px;top:0px;width:1px;height:28px;background:#5a5a5a;"></div>
<div class="a" style="left:285px;top:29px;width:1px;height:180px;background:rgba(255,255,255,.55);"></div>
<div class="a" style="left:566px;top:0px;width:1px;height:28px;background:#5a5a5a;"></div>
<div class="a" style="left:566px;top:29px;width:1px;height:180px;background:rgba(255,255,255,.55);"></div>
<div class="a" style="left:739px;top:0px;width:1px;height:28px;background:#5a5a5a;"></div>
<div class="a" style="left:739px;top:29px;width:1px;height:180px;background:rgba(255,255,255,.55);"></div>
<div class="a" style="left:1025px;top:0px;width:1px;height:28px;background:#5a5a5a;"></div>
<div class="a" style="left:1025px;top:29px;width:1px;height:180px;background:rgba(255,255,255,.55);"></div>
<div class="a" style="left:1203px;top:0px;width:1px;height:28px;background:#5a5a5a;"></div>
<div class="a" style="left:1203px;top:29px;width:1px;height:180px;background:rgba(255,255,255,.55);"></div>
<div class="a" style="left:1475px;top:0px;width:1px;height:28px;background:#5a5a5a;"></div>
<div class="a" style="left:1475px;top:29px;width:1px;height:180px;background:rgba(255,255,255,.55);"></div>
<div class="a" style="left:29px;top:28px;width:1px;height:180px;background:#6e6e6e;"></div>
<div class="a" style="left:0px;top:28px;width:1508px;height:1px;background:#6e6e6e;"></div>
</div>
<div class="a" style="left:1557px;top:584px;width:17px;height:201px;background:#f7f7f7;"></div>
<svg class="a" style="left:1561.5px;top:589.5px;" width="9" height="7" viewBox="0 0 9 7"><path d="M1 5.500l3.500-3.500 3.500 3.500" stroke="#404040" stroke-width="2.100" fill="none"/></svg>
<div class="a" style="left:1558px;top:601px;width:15px;height:17px;background:#cdd1cd;"></div>
<svg class="a" style="left:1561px;top:774px;" width="9" height="7" viewBox="0 0 9 7"><path d="M1 1.500l3.500 3.500 3.500-3.500" stroke="#404040" stroke-width="2.100" fill="none"/></svg>
<div class="a" style="left:50px;top:785px;width:1507px;height:16px;background:#f7f7f7;"></div>
<svg class="a" style="left:53px;top:788px;" width="8" height="10" viewBox="0 0 8 10"><path d="M6 1l-4 4 4 4" stroke="#404040" stroke-width="2.100" fill="none"/></svg>
<div class="a" style="left:66px;top:786px;width:906px;height:15px;background:#cdd1cd;"></div>
<svg class="a" style="left:1545px;top:788px;" width="8" height="10" viewBox="0 0 8 10"><path d="M2 1l4 4-4 4" stroke="#404040" stroke-width="2.100" fill="none"/></svg>
<svg class="a" style="left:1578px;top:592px;" width="17" height="17" viewBox="0 0 17 17"><rect x="2.700" y="1.700" width="12.600" height="12.600" fill="#fff" stroke="#1592d6" stroke-width="1.500"/><rect x="7.500" y="2" width="5" height="7" fill="#62c4f2"/><rect x="12.500" y="2" width="3" height="12" fill="#1592d6"/><circle cx="4.600" cy="12.300" r="3.900" fill="#f7f7f7"/><g transform="translate(4.600 12.300)" fill="#1592d6"><rect x="-1.100" y="-3.800" width="2.200" height="7.600"/><rect x="-1.100" y="-3.800" width="2.200" height="7.600" transform="rotate(60)"/><rect x="-1.100" y="-3.800" width="2.200" height="7.600" transform="rotate(120)"/><circle r="2.700"/><circle r="1.100" fill="#fff"/></g></svg>
<span class="t" style="left:1586px;top:621px;line-height:14px;font-size:12px;color:#000;transform:translate(-50%,-50%) rotate(90deg)">面板</span>
<svg class="a" style="left:1578px;top:651px;" width="15" height="14" viewBox="0 0 15 14"><rect x="0.750" y="0.750" width="13.500" height="12.500" fill="#fff" stroke="#1592d6" stroke-width="1.500"/><rect x="1.5" y="1.5" width="2" height="2" fill="#1592d6"/><rect x="3.5" y="1.5" width="2" height="2" fill="#fff"/><rect x="5.5" y="1.5" width="2" height="2" fill="#62c4f2"/><rect x="7.5" y="1.5" width="2" height="2" fill="#fff"/><rect x="9.5" y="1.5" width="2" height="2" fill="#1592d6"/><rect x="11.5" y="1.5" width="2" height="2" fill="#fff"/><rect x="1.5" y="3.5" width="2" height="2" fill="#fff"/><rect x="3.5" y="3.5" width="2" height="2" fill="#62c4f2"/><rect x="5.5" y="3.5" width="2" height="2" fill="#fff"/><rect x="7.5" y="3.5" width="2" height="2" fill="#1592d6"/><rect x="9.5" y="3.5" width="2" height="2" fill="#fff"/><rect x="11.5" y="3.5" width="2" height="2" fill="#62c4f2"/><rect x="1.5" y="5.5" width="2" height="2" fill="#62c4f2"/><rect x="3.5" y="5.5" width="2" height="2" fill="#62c4f2"/><rect x="5.5" y="5.5" width="2" height="2" fill="#1592d6"/><rect x="7.5" y="5.5" width="2" height="2" fill="#1592d6"/><rect x="9.5" y="5.5" width="2" height="2" fill="#62c4f2"/><rect x="11.5" y="5.5" width="2" height="2" fill="#62c4f2"/><rect x="1.5" y="7.5" width="2" height="2" fill="#1592d6"/><rect x="3.5" y="7.5" width="2" height="2" fill="#1592d6"/><rect x="5.5" y="7.5" width="2" height="2" fill="#62c4f2"/><rect x="7.5" y="7.5" width="2" height="2" fill="#62c4f2"/><rect x="9.5" y="7.5" width="2" height="2" fill="#1592d6"/><rect x="11.5" y="7.5" width="2" height="2" fill="#1592d6"/></svg>
<svg class="a" style="left:1577px;top:672px;" width="16" height="16" viewBox="0 0 16 16"><circle cx="8" cy="7.800" r="6.600" fill="#fff" stroke="#1592d6" stroke-width="1.500"/><rect x="4.800" y="4.600" width="2.100" height="2.100" fill="#1592d6"/><rect x="9.100" y="4.600" width="2.100" height="2.100" fill="#1592d6"/><rect x="4.800" y="8.900" width="2.100" height="2.100" fill="#1592d6"/><rect x="9.100" y="8.900" width="2.100" height="2.100" fill="#1592d6"/></svg>
<svg class="a" style="left:1578px;top:693px;" width="15" height="18" viewBox="0 0 15 18"><path d="M5.500 0.500v4M3.800 2.700l1.700 1.800 1.700-1.800" stroke="#f7841a" stroke-width="1.200" fill="none"/><rect x="0" y="5.800" width="14" height="11.200" rx="1" fill="#1592d6"/><path d="M1.500 10.500h3v2h-3zM1.500 13.500h3v2h-3zM8 7.500h2.500v2h-2.500zM8 10.500h2.500v2h-2.500zM8 13.500h2.500v2h-2.500zM11.500 7.500h1.500v2h-1.500zM11.500 10.500h1.500v2h-1.500zM11.500 13.500h1.500v2h-1.500z" fill="#fff"/><path d="M8 7.500h2.500v2h-2.500zM11.500 7.500h1.500v2h-1.500zM1.500 7.500h1.500v2h-1.500z" fill="#62c4f2"/><rect x="3.300" y="5.800" width="3.600" height="11.200" fill="#f7841a"/><path d="M4.200 10.500h1.800v2h-1.800zM4.200 13.500h1.800v2h-1.800z" fill="#fff"/><path d="M4.200 7.500h1.800v2h-1.800z" fill="#fbc08a"/></svg>
<svg class="a" style="left:1578px;top:716px;" width="15" height="16" viewBox="0 0 15 16"><rect x="0.750" y="0.750" width="12.800" height="13.500" fill="#fff" stroke="#1592d6" stroke-width="1.500"/><rect x="0.750" y="0.750" width="12.800" height="2.200" fill="#1592d6"/><rect x="1.500" y="3.500" width="6.300" height="5.500" fill="#62c4f2"/><rect x="7.800" y="9.800" width="7.200" height="5.500" fill="#f7f7f7"/><path d="M9.500 12.300h5M9.500 10.700v3.200M14.300 10.700v3.200" stroke="#1592d6" stroke-width="1.200"/></svg>
<svg class="a" style="left:1578px;top:738px;" width="15" height="15" viewBox="0 0 15 15"><circle cx="3.500" cy="3.800" r="3.200" fill="#1592d6"/><path d="M1.800 3.800h3.400" stroke="#d8eefb" stroke-width="1.200"/><circle cx="11" cy="3.800" r="3.200" fill="#1592d6"/><path d="M9.300 3.800h3.400M11 2.300v3" stroke="#8fd2f5" stroke-width="1.200"/><circle cx="3.500" cy="11.300" r="2.700" fill="#fff" stroke="#1592d6" stroke-width="1.100"/><path d="M1.800 9.600l3.400 3.400M5.200 9.600l-3.400 3.400" stroke="#1592d6" stroke-width="1"/><circle cx="11" cy="11.300" r="3.200" fill="#f7841a"/><path d="M9 10.400h4M9 12.300h4" stroke="#fff" stroke-width="1"/></svg>
<svg class="a" style="left:1577px;top:815px;" width="17" height="16" viewBox="0 0 17 16"><rect x="1" y="1" width="5" height="14" rx="1.500" fill="#1592d6"/><path d="M7 11h7.500l1 2-1 2h-7.500z" fill="#1592d6"/><path d="M14.500 9c0-3-1.800-5-5-5.500" stroke="#1592d6" stroke-width="1.500" fill="none"/><path d="M10.500 0.500l-3.500 3 3.800 3z" fill="#1592d6"/></svg>
<svg class="a" style="left:59px;top:809px;" width="16" height="16" viewBox="0 0 16 16"><path d="M2.500 7.500a5.500 5.500 0 0 1 9.500-3.500M13.500 8.500a5.500 5.500 0 0 1-9.500 3.500" stroke="#1e90d2" stroke-width="1.800" fill="none"/><path d="M13.500 1v4.500h-4.500zM2.500 15v-4.500h4.500z" fill="#1e90d2"/><path d="M5 8l3-3 3 3-3 3z" fill="#8fd0f5"/></svg>
<span class="t" style="top:808.6px;font-size:12px;line-height:20px;left:78.8px;transform-origin:0 50%;transform:scaleX(0.9993);">刷新</span>
<svg class="a" style="left:117.5px;top:816px;" width="7" height="4" viewBox="0 0 7 4"><path d="M0 0H7L3.5 4Z" fill="#3c3c3c"/></svg>
<div class="a" style="left:134px;top:811px;width:2px;height:2px;background:#bdb5a2;"></div>
<div class="a" style="left:134px;top:815px;width:2px;height:2px;background:#bdb5a2;"></div>
<div class="a" style="left:134px;top:819px;width:2px;height:2px;background:#bdb5a2;"></div>
<div class="a" style="left:134px;top:823px;width:2px;height:2px;background:#bdb5a2;"></div>
<svg class="a" style="left:145px;top:809px;" width="16" height="16" viewBox="0 0 16 16"><circle cx="8" cy="8" r="6.800" fill="none" stroke="#b0b0b0" stroke-width="1.300"/><path d="M4.500 8.200l2.500 2.600 4.500-5" stroke="#b0b0b0" stroke-width="1.300" fill="none"/></svg>
<span class="t" style="top:808.6px;font-size:12px;line-height:20px;left:166.3px;color:#a8a8a8;transform-origin:0 50%;transform:scaleX(0.9577);">保存</span>
<svg class="a" style="left:204px;top:816px;" width="7" height="4" viewBox="0 0 7 4"><path d="M0 0H7L3.5 4Z" fill="#6a6a6a"/></svg>
<svg class="a" style="left:221px;top:811px;" width="13" height="13" viewBox="0 0 13 13"><rect x="0.700" y="0.700" width="11.600" height="11.600" fill="none" stroke="#b0b0b0" stroke-width="1.300"/><path d="M3.500 3.500l6 6M9.500 3.500l-6 6" stroke="#b0b0b0" stroke-width="1.200"/></svg>
<span class="t" style="top:808.6px;font-size:12px;line-height:20px;left:238.8px;color:#a8a8a8;transform-origin:0 50%;transform:scaleX(0.9993);">取消</span>
<div class="a" style="left:273px;top:805px;width:1px;height:26px;background:#9a9a9a;"></div>
<svg class="a" style="left:283px;top:811px;" width="16" height="14" viewBox="0 0 16 14"><path d="M1 1.500h14M1 6h10M1 10.500h6" stroke="#1e90d2" stroke-width="1.700"/><path d="M9 13.500l1-3 4-4 2 2-4 4z" fill="#1e90d2"/></svg>
<svg class="a" style="left:307px;top:811px;" width="16" height="14" viewBox="0 0 16 14"><path d="M1 1.500h14M1 6h8M1 10.500h8M13 6v7M9.500 9.500h7" stroke="#a8a8a8" stroke-width="1.600" fill="none"/></svg>
<svg class="a" style="left:332px;top:811px;" width="15" height="14" viewBox="0 0 15 14"><path d="M1 1.500h13M1 6h4M1 10.500h4" stroke="#a8a8a8" stroke-width="1.600"/><circle cx="10" cy="9" r="3.800" fill="none" stroke="#a8a8a8" stroke-width="1.200"/><path d="M10 7v4M8 9h4" stroke="#a8a8a8" stroke-width="1.200"/></svg>
<svg class="a" style="left:355px;top:811px;" width="16" height="14" viewBox="0 0 16 14"><path d="M1 1.500h14M1 6h8M1 10.500h8M11 10.500h5" stroke="#a8a8a8" stroke-width="1.600" fill="none"/></svg>
<div class="a" style="left:379px;top:811px;width:2px;height:2px;background:#bdb5a2;"></div>
<div class="a" style="left:379px;top:815px;width:2px;height:2px;background:#bdb5a2;"></div>
<div class="a" style="left:379px;top:819px;width:2px;height:2px;background:#bdb5a2;"></div>
<div class="a" style="left:379px;top:823px;width:2px;height:2px;background:#bdb5a2;"></div>
<svg class="a" style="left:387px;top:810px;" width="14" height="14" viewBox="0 0 14 14"><path d="M1.500 0.500v13" stroke="#a8a8a8" stroke-width="1.800"/><path d="M12 1l-6.500 6 6.500 6" stroke="#a8a8a8" stroke-width="1.800" fill="none"/></svg>
<svg class="a" style="left:412px;top:810px;" width="10" height="14" viewBox="0 0 10 14"><path d="M8.500 1l-6.500 6 6.500 6" stroke="#a8a8a8" stroke-width="1.800" fill="none"/></svg>
<svg class="a" style="left:437px;top:810px;" width="10" height="14" viewBox="0 0 10 14"><path d="M1.500 1l6.500 6-6.500 6" stroke="#1e90d2" stroke-width="1.800" fill="none"/></svg>
<svg class="a" style="left:457px;top:810px;" width="13" height="14" viewBox="0 0 13 14"><path d="M1.500 1l6.500 6-6.500 6" stroke="#1e90d2" stroke-width="1.800" fill="none"/><path d="M11.500 0.500v13" stroke="#1e90d2" stroke-width="1.800"/></svg>
<svg class="a" style="left:478px;top:810px;" width="16" height="14" viewBox="0 0 16 14"><path d="M1 4v-3h3.500M11.500 1h3.500v3M15 10v3h-3.500M4.500 13h-3.500v-3" stroke="#1e90d2" stroke-width="1.500" fill="none"/><rect x="4.500" y="3.500" width="7" height="7" fill="#1e90d2"/><rect x="6.500" y="5.500" width="3" height="3" fill="#8fd0f5"/></svg>
<div class="a" style="left:502px;top:811px;width:2px;height:2px;background:#bdb5a2;"></div>
<div class="a" style="left:502px;top:815px;width:2px;height:2px;background:#bdb5a2;"></div>
<div class="a" style="left:502px;top:819px;width:2px;height:2px;background:#bdb5a2;"></div>
<div class="a" style="left:502px;top:823px;width:2px;height:2px;background:#bdb5a2;"></div>
<svg class="a" style="left:517px;top:809px;" width="14" height="15" viewBox="0 0 14 15"><path d="M1 9.500v4.500h12v-4.500" stroke="#1e90d2" stroke-width="1.500" fill="none"/><path d="M7 11v-9M3.500 4.500l3.500-3.500 3.500 3.500" stroke="#1e90d2" stroke-width="1.700" fill="none"/></svg>
<span class="t" style="top:808.6px;font-size:12px;line-height:20px;left:536.3px;transform-origin:0 50%;transform:scaleX(0.9739);">导出数据...</span>
<svg class="a" style="left:608px;top:816px;" width="7" height="4" viewBox="0 0 7 4"><path d="M0 0H7L3.5 4Z" fill="#1a1a1a"/></svg>
<div class="a" style="left:624px;top:811px;width:2px;height:2px;background:#bdb5a2;"></div>
<div class="a" style="left:624px;top:815px;width:2px;height:2px;background:#bdb5a2;"></div>
<div class="a" style="left:624px;top:819px;width:2px;height:2px;background:#bdb5a2;"></div>
<div class="a" style="left:624px;top:823px;width:2px;height:2px;background:#bdb5a2;"></div>
<svg class="a" style="left:631.5px;top:809.5px;" width="15" height="15" viewBox="0 0 15 15"><g transform="translate(7.500 7.500)"><g fill="#1e90d2"><rect x="-2.300" y="-7.300" width="4.600" height="14.600" rx="1"/><rect x="-2.300" y="-7.300" width="4.600" height="14.600" rx="1" transform="rotate(60)"/><rect x="-2.300" y="-7.300" width="4.600" height="14.600" rx="1" transform="rotate(120)"/><circle r="5.600"/></g><path d="M0-3.200l3.200 3.200-3.200 3.200-3.200-3.200z" fill="#7fd0f7"/></g></svg>
<div class="a" style="left:654px;top:806px;width:54px;height:23px;background:#fff;border:1px solid #8a8a8a;box-sizing:border-box;"></div>
<span class="t" style="top:808px;font-size:12px;line-height:20px;left:658.8px;transform-origin:0 50%;transform:scaleX(0.9735);">200</span>
<svg class="a" style="left:714px;top:810px;" width="15" height="14" viewBox="0 0 15 14"><path d="M1 9v4.500h13v-4.500" stroke="#1e90d2" stroke-width="1.500" fill="none"/><path d="M2.500 0.500l5 5 5-5M7.500 5.500v6" stroke="#1e90d2" stroke-width="1.400" fill="none"/></svg>
<span class="t" style="top:808px;font-size:12px;line-height:20px;left:737.5px;transform-origin:0 50%;transform:scaleX(0.9984);">446</span>
<div class="a" style="left:765px;top:811px;width:2px;height:2px;background:#bdb5a2;"></div>
<div class="a" style="left:765px;top:815px;width:2px;height:2px;background:#bdb5a2;"></div>
<div class="a" style="left:765px;top:819px;width:2px;height:2px;background:#bdb5a2;"></div>
<div class="a" style="left:765px;top:823px;width:2px;height:2px;background:#bdb5a2;"></div>
<div class="a" style="left:794px;top:816px;width:1px;height:1px;background:#5a8ab8;"></div>
<div class="a" style="left:796px;top:816px;width:1px;height:1px;background:#5a8ab8;"></div>
<div class="a" style="left:798px;top:816px;width:1px;height:1px;background:#5a8ab8;"></div>
<span class="t" style="top:807px;font-size:12px;line-height:20px;left:812.5px;transform-origin:0 50%;transform:scaleX(1.0471);">200 行已获取 - 3.738s (3ms 获取), 2025-10-21 20:22:28</span>
<div class="a" style="left:24px;top:833px;width:1574px;height:1px;background:#d8d8d8;"></div>
<div class="a" style="left:0px;top:834px;width:1600px;height:26px;background:#f7f7f7;"></div>
<div class="a" style="left:778px;top:835px;width:1px;height:21px;background:#a0a0a0;"></div>
<div class="a" style="left:814px;top:835px;width:1px;height:21px;background:#a0a0a0;"></div>
<div class="a" style="left:841px;top:835px;width:1px;height:21px;background:#a0a0a0;"></div>
<div class="a" style="left:975px;top:835px;width:1px;height:21px;background:#a0a0a0;"></div>
<div class="a" style="left:1103px;top:835px;width:1px;height:21px;background:#a0a0a0;"></div>
<div class="a" style="left:1231px;top:835px;width:1px;height:21px;background:#a0a0a0;"></div>
<span class="t" style="top:835px;font-size:12px;line-height:20px;left:786.3px;transform-origin:0 50%;transform:scaleX(0.9167);">CST</span>
<span class="t" style="top:835px;font-size:12px;line-height:20px;left:822px;transform-origin:0 50%;transform:scaleX(0.9852);">zh</span>
<span class="t" style="top:835px;font-size:12px;line-height:20px;left:848.8px;transform-origin:0 50%;transform:scaleX(0.9993);">可写</span>
<span class="t" style="top:835px;font-size:12px;line-height:20px;left:982.5px;transform-origin:0 50%;transform:scaleX(0.9997);">智能插入</span>
<span class="t" style="top:835px;font-size:12px;line-height:20px;left:1111.3px;transform-origin:0 50%;transform:scaleX(1.0548);">1532 : 1 : 63883</span>
<span class="t" style="top:835px;font-size:12px;line-height:20px;left:1239.3px;transform-origin:0 50%;transform:scaleX(1.0391);">Sel: 0 | 0</span>
<div class="a" style="left:1315px;top:840px;width:2px;height:2px;background:#bdb5a2;"></div>
<div class="a" style="left:1315px;top:844px;width:2px;height:2px;background:#bdb5a2;"></div>
<div class="a" style="left:1315px;top:848px;width:2px;height:2px;background:#bdb5a2;"></div>
<div class="a" style="left:1315px;top:852px;width:2px;height:2px;background:#bdb5a2;"></div>
<div class="a" style="left:0px;top:860px;width:1600px;height:40px;background:#000;"></div>
<svg class="a" style="left:15.5px;top:871.5px;" width="17" height="17" viewBox="0 0 17 17"><path d="M0 2.400l6.800-.9v6.300h-6.800zM7.700 1.400l8.800-1.200v7.600h-8.800zM0 8.700h6.800v6.300l-6.800-.9zM7.700 8.700h8.800v7.600l-8.800-1.200z" fill="#fff"/></svg>
<svg class="a" style="left:63px;top:870px;" width="18" height="19" viewBox="0 0 18 19"><circle cx="11.200" cy="7.400" r="5.300" fill="none" stroke="#fff" stroke-width="1.300"/><path d="M7.500 11.500l-6 6.300" stroke="#fff" stroke-width="1.500"/></svg>
<svg class="a" style="left:110px;top:871px;" width="19" height="17" viewBox="0 0 19 17"><rect x="2.800" y="4.800" width="9.600" height="7.400" fill="none" stroke="#fff" stroke-width="1.300"/><path d="M2.200 1.500h10.800M2.200 15.500h10.800M2.200 1v2M13 1v2M2.200 14v2M13 14v2M16.200 1v3M16.200 9v7" stroke="#fff" stroke-width="1.200" fill="none"/><rect x="15.200" y="5" width="2.400" height="2.600" fill="#fff"/></svg>
<svg class="a" style="left:159px;top:867px;" width="24" height="24" viewBox="0 0 24 24"><defs><linearGradient id="ieg" x1="0" y1="0" x2="0" y2="1"><stop offset="0" stop-color="#7fd4fb"/><stop offset="1" stop-color="#1b8fe0"/></linearGradient></defs><path d="M6.800 12.300h12.400a7 7 0 1 0-2.200 5.800" stroke="url(#ieg)" stroke-width="4.200" fill="none"/><path d="M2.200 19.500c-1.500 3 1 4 4.500 2M21 6.500c1.500-3.500-.5-5.500-5-3.200-5 2.500-10 8-13.500 15" stroke="#f5c21a" stroke-width="1.600" fill="none"/></svg>
<svg class="a" style="left:208px;top:870px;" width="24" height="20" viewBox="0 0 24 20"><path d="M1.500 1.500h7.500l1.500 2h11.500v15h-20.500z" fill="#f3c344"/><path d="M1.500 4.500h20.500v14h-20.500z" fill="#fbe393"/><path d="M6.500 11.500h10.500v7h-10.500z" fill="#3aa5e8"/><path d="M9 14.500h5.500v4h-5.500z" fill="#fbe393"/></svg>
<svg class="a" style="left:257px;top:868px;" width="24" height="24" viewBox="0 0 24 24"><circle cx="12" cy="12" r="10.900" fill="#fff" stroke="#4fc2c8" stroke-width="2"/><path d="M7.600 21c.4-3 1.200-5.600 2.300-7.900 1.500.5 2.900 1.300 4.100 2.400l.9-2.600.7 3.100 1.300-.6c.5 1.700.4 3.500 0 5.100-3 1.700-6.400 1.800-9.300.5z" fill="#3a2d27"/><path d="M14.600 16.700l1.500-.7.300 2.100-1.400.5z" fill="#fff"/><ellipse cx="15.600" cy="8.200" rx="2.300" ry="1.400" transform="rotate(-10 15.600 8.200)" fill="#2e2320"/><path d="M5.700 8.600c-1.500 1.500-2 3.900-1.400 6.200 1.100-1.200 1.900-2.900 2.200-4.900z" fill="#3a2d27"/><path d="M6.200 9.300c1.300-2.400 3.400-4 6.300-4.500" stroke="#7a6f6a" stroke-width=".8" fill="none"/><circle cx="10.600" cy="7.600" r=".7" fill="#3a2d27"/></svg>
<div class="a" style="left:294px;top:860px;width:48px;height:40px;background:#333;"></div>
<div class="a" style="left:294px;top:898px;width:48px;height:2px;background:#76b9ed;"></div>
<svg class="a" style="left:306px;top:868px;" width="24" height="24" viewBox="0 0 24 24"><circle cx="12" cy="12" r="10.900" fill="#fff" stroke="#4fc2c8" stroke-width="2"/><path d="M7.600 21c.4-3 1.200-5.600 2.300-7.900 1.500.5 2.900 1.300 4.100 2.400l.9-2.600.7 3.100 1.300-.6c.5 1.700.4 3.500 0 5.100-3 1.700-6.400 1.800-9.300.5z" fill="#3a2d27"/><path d="M14.600 16.700l1.500-.7.300 2.100-1.400.5z" fill="#fff"/><ellipse cx="15.600" cy="8.200" rx="2.300" ry="1.400" transform="rotate(-10 15.600 8.200)" fill="#2e2320"/><path d="M5.700 8.600c-1.500 1.500-2 3.900-1.400 6.200 1.100-1.200 1.900-2.900 2.200-4.900z" fill="#3a2d27"/><path d="M6.200 9.300c1.300-2.400 3.400-4 6.300-4.500" stroke="#7a6f6a" stroke-width=".8" fill="none"/><circle cx="10.600" cy="7.600" r=".7" fill="#3a2d27"/></svg>
<svg class="a" style="left:1347px;top:875px;" width="14" height="9" viewBox="0 0 14 9"><path d="M1 8l6-6 6 6" stroke="#fff" stroke-width="1.400" fill="none"/></svg>
<svg class="a" style="left:1372px;top:871px;" width="14" height="18" viewBox="0 0 14 18"><rect x="3.500" y="0.700" width="6" height="4.500" fill="none" stroke="#fff" stroke-width="1.100"/><rect x="1.700" y="5" width="9.600" height="11.500" rx="1" fill="none" stroke="#fff" stroke-width="1.100"/><path d="M5.500 2.500h.01M7.500 2.500h.01" stroke="#fff" stroke-width="1"/><path d="M8.500 14.500l2 2 3-4" stroke="#fff" stroke-width="1" fill="none"/></svg>
<svg class="a" style="left:1393px;top:873px;" width="18" height="16" viewBox="0 0 18 16"><rect x="3.500" y="1.500" width="13" height="9" fill="none" stroke="#fff" stroke-width="1.200"/><path d="M10 10.500v3.500M6 14.500h8" stroke="#fff" stroke-width="1.200"/><rect x="0.600" y="0.600" width="5" height="4" fill="#000" stroke="#fff" stroke-width="1"/><path d="M3 4.500v3" stroke="#fff" stroke-width="1"/></svg>
<svg class="a" style="left:1417px;top:872px;" width="18" height="16" viewBox="0 0 18 16"><path d="M1 5.500h3l4-3.500v12l-4-3.500h-3z" fill="none" stroke="#fff" stroke-width="1.100"/><path d="M10.500 5.500a4 4 0 0 1 0 5M12.800 3.500a7 7 0 0 1 0 9M15 1.500a10 10 0 0 1 0 13" stroke="#fff" stroke-width="1" fill="none"/></svg>
<span class="t" style="top:870px;font-size:12px;line-height:20px;left:1443.8px;color:#fff;transform-origin:0 50%;transform:scaleX(0.961);">ENG</span>
<span class="t" style="top:861px;font-size:12px;line-height:20px;left:1495px;color:#fff;transform-origin:0 50%;transform:scaleX(1.0256);">20:22</span>
<span class="t" style="top:880px;font-size:12px;line-height:20px;left:1477.5px;color:#fff;transform-origin:0 50%;transform:scaleX(1.0739);">2025/10/21</span>
<svg class="a" style="left:1558px;top:871px;" width="25" height="25" viewBox="0 0 25 25"><path d="M1 1.500h15v11h-9l-3 3v-3h-3z" fill="#fff"/><path d="M3.500 4.500h10M3.500 7h10M3.500 9.500h10" stroke="#000" stroke-width=".9"/><circle cx="17" cy="17" r="6.800" fill="#3a3a3a" stroke="#1a1a1a" stroke-width="1"/><text x="17" y="20.700" font-size="10.500" font-weight="bold" font-family="Liberation Sans,sans-serif" text-anchor="middle" fill="#fff">1</text></svg>
<div class="a" style="left:1595px;top:860px;width:1px;height:40px;background:#4a4a4a;"></div>
<div class="a" style="left:1598px;top:0px;width:1px;height:860px;background:rgba(0,0,0,.03);"></div>
<div class="a" style="left:1599px;top:0px;width:1px;height:860px;background:rgba(0,0,0,.1);"></div>
<div class="wm" style="left:69px;top:210.5px"><i>audit审计01(Audit1)</i>
<b>audit-172.18.210.237</b></div>
<div class="wm" style="left:369px;top:210.5px"><i>audit审计01(Audit1)</i>
<b>audit-172.18.210.237</b></div>
<div class="wm" style="left:669px;top:210.5px"><i>audit审计01(Audit1)</i>
<b>audit-172.18.210.237</b></div>
<div class="wm" style="left:969px;top:210.5px"><i>audit审计01(Audit1)</i>
<b>audit-172.18.210.237</b></div>
<div class="wm" style="left:1269px;top:210.5px"><i>audit审计01(Audit1)</i>
<b>audit-172.18.210.237</b></div>
<div class="wm" style="left:1569px;top:210.5px"><i>audit审计01(Audit1)</i>
<b>audit-172.18.210.237</b></div>
<div class="wm" style="left:69px;top:510.5px"><i>audit审计01(Audit1)</i>
<b>audit-172.18.210.237</b></div>
<div class="wm" style="left:369px;top:510.5px"><i>audit审计01(Audit1)</i>
<b>audit-172.18.210.237</b></div>
<div class="wm" style="left:669px;top:510.5px"><i>audit审计01(Audit1)</i>
<b>audit-172.18.210.237</b></div>
<div class="wm" style="left:969px;top:510.5px"><i>audit审计01(Audit1)</i>
<b>audit-172.18.210.237</b></div>
<div class="wm" style="left:1269px;top:510.5px"><i>audit审计01(Audit1)</i>
<b>audit-172.18.210.237</b></div>
<div class="wm" style="left:1569px;top:510.5px"><i>audit审计01(Audit1)</i>
<b>audit-172.18.210.237</b></div>
<div class="wm" style="left:69px;top:810.5px"><i>audit审计01(Audit1)</i>
<b>audit-172.18.210.237</b></div>
<div class="wm" style="left:369px;top:810.5px"><i>audit审计01(Audit1)</i>
<b>audit-172.18.210.237</b></div>
<div class="wm" style="left:669px;top:810.5px"><i>audit审计01(Audit1)</i>
<b>audit-172.18.210.237</b></div>
<div class="wm" style="left:969px;top:810.5px"><i>audit审计01(Audit1)</i>
<b>audit-172.18.210.237</b></div>
<div class="wm" style="left:1269px;top:810.5px"><i>audit审计01(Audit1)</i>
<b>audit-172.18.210.237</b></div>
<div class="wm" style="left:1569px;top:810.5px"><i>audit审计01(Audit1)</i>
<b>audit-172.18.210.237</b></div>
</body></html>
